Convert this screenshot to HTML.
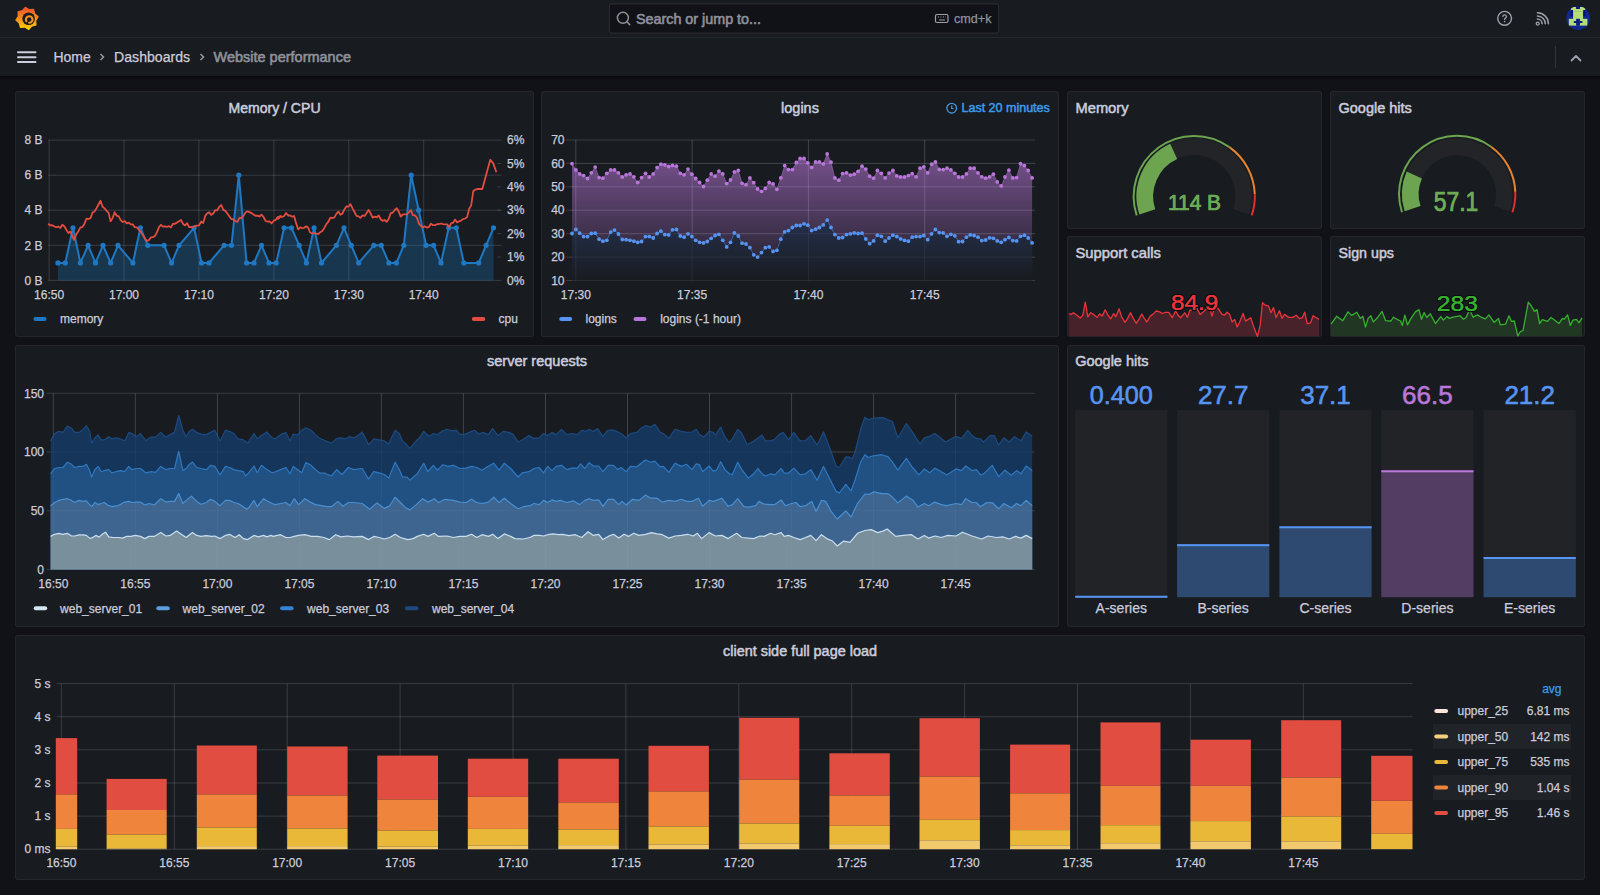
<!DOCTYPE html>
<html><head><meta charset="utf-8"><style>
html,body{margin:0;padding:0;background:#111217;width:1600px;height:895px;overflow:hidden}
svg{display:block;font-family:"Liberation Sans", sans-serif}
</style></head><body>
<svg width="1600" height="895" viewBox="0 0 1600 895">
<defs>
<linearGradient id="logog" x1="0" y1="0" x2="0" y2="1"><stop offset="0.1" stop-color="#f05a28"/><stop offset="0.95" stop-color="#fbca0a"/></linearGradient>
<linearGradient id="hdrshadow" x1="0" y1="0" x2="0" y2="1"><stop offset="0" stop-color="#050608" stop-opacity="0.9"/><stop offset="1" stop-color="#111217" stop-opacity="0"/></linearGradient>
<linearGradient id="gp" x1="0" y1="140" x2="0" y2="280.5" gradientUnits="userSpaceOnUse"><stop offset="0" stop-color="#B877D9" stop-opacity="0.66"/><stop offset="1" stop-color="#B877D9" stop-opacity="0.03"/></linearGradient>
<linearGradient id="gb" x1="0" y1="200" x2="0" y2="280.5" gradientUnits="userSpaceOnUse"><stop offset="0" stop-color="#24365a" stop-opacity="1"/><stop offset="1" stop-color="#181b1f" stop-opacity="1"/></linearGradient>
</defs>
<rect x="0" y="0" width="1600" height="76" fill="#181b1f"/><line x1="0" y1="37.5" x2="1600" y2="37.5" stroke="rgba(204,204,220,0.07)"/><rect x="0" y="76" width="1600" height="6" fill="url(#hdrshadow)"/><polygon points="25.3,7.3 29.2,9.7 33.6,9.4 34.7,13.8 38.1,16.7 35.7,20.6 36,25 31.6,26.1 28.7,29.5 24.8,27.1 20.4,27.4 19.3,23 15.9,20.1 18.3,16.2 18,11.8 22.4,10.7" fill="url(#logog)" stroke="url(#logog)" stroke-width="1.2" stroke-linejoin="round"/><circle cx="28.6" cy="18.8" r="6.3" fill="#181b1f"/><path d="M26.4 21.2A3.3 3.3 0 1 1 29.2 22.8" fill="none" stroke="#f7931e" stroke-width="2.1" stroke-linecap="round"/><rect x="609.5" y="4" width="389" height="29" rx="2" fill="#111217" stroke="rgba(204,204,220,0.12)"/><circle cx="622.9" cy="17.8" r="5.5" fill="none" stroke="#8f909b" stroke-width="1.5"/><line x1="626.9" y1="21.8" x2="629.7" y2="24.6" stroke="#8f909b" stroke-width="1.5" stroke-linecap="round"/><text x="636" y="23.5" font-size="14.3" fill="#8f909b" text-anchor="start" stroke="#8f909b" stroke-width="0.6"  textLength="125" lengthAdjust="spacingAndGlyphs">Search or jump to...</text><rect x="935.5" y="14.5" width="12.5" height="8" rx="1.5" fill="none" stroke="#9fa0ab" stroke-width="1.2"/><path d="M938 17h1M940.5 17h1M943 17h1M945.5 17h.5M939 20h6" stroke="#9fa0ab" stroke-width="1"/><text x="954" y="22.5" font-size="12" fill="#8f909b" text-anchor="start" stroke="#8f909b" stroke-width="0.25"  textLength="37.5" lengthAdjust="spacingAndGlyphs">cmd+k</text><circle cx="1504.6" cy="18.3" r="6.9" fill="none" stroke="#9fa0ab" stroke-width="1.4"/><path d="M1502.9 16.6a1.75 1.75 0 1 1 2.6 1.5c-.6.35-.9.6-.9 1.3" fill="none" stroke="#9fa0ab" stroke-width="1.3" stroke-linecap="round"/><circle cx="1504.6" cy="21.6" r="0.8" fill="#9fa0ab"/><g fill="none" stroke="#9fa0ab" stroke-width="1.5" stroke-linecap="round"><path d="M1537.4 19.1a4.7 4.7 0 0 1 4.7 4.7"/><path d="M1537.4 15.9a7.9 7.9 0 0 1 7.9 7.9"/><path d="M1537.4 12.8a11 11 0 0 1 11 11"/></g><circle cx="1537.7" cy="23.6" r="1.5" fill="none" stroke="#9fa0ab" stroke-width="1.3"/><clipPath id="avc"><circle cx="1578.1" cy="18.05" r="11.9"/></clipPath><g clip-path="url(#avc)"><rect x="1566" y="5" width="25" height="26" fill="#10298c"/><rect x="1570.9" y="7" width="14.3" height="4.8" fill="#b4dc78"/><rect x="1573.1" y="11.6" width="10" height="7.4" fill="#b4dc78"/><rect x="1568.8" y="18.8" width="18.6" height="6.8" fill="#b4dc78"/><rect x="1576.1" y="6" width="3.8" height="3" fill="#07157a"/><rect x="1576.1" y="18.8" width="3.8" height="7" fill="#0b1f82"/><rect x="1573.8" y="21" width="8.6" height="2" fill="#0b1f82"/><rect x="1570.6" y="10" width="2.4" height="6" fill="#07157a"/><rect x="1583.2" y="10" width="2.4" height="6" fill="#07157a"/></g><g stroke="#ccccdc" stroke-width="2" stroke-linecap="round"><line x1="18" y1="52.3" x2="35.5" y2="52.3"/><line x1="18" y1="57.2" x2="35.5" y2="57.2"/><line x1="18" y1="62.1" x2="35.5" y2="62.1"/></g><text x="53.5" y="62" font-size="14" fill="#ccccdc" text-anchor="start" stroke="#ccccdc" stroke-width="0.25"  textLength="37.2" lengthAdjust="spacingAndGlyphs">Home</text><path d="M100.5 54l3 3-3 3" fill="none" stroke="#9a9aa5" stroke-width="1.5"/><text x="114" y="62" font-size="14" fill="#ccccdc" text-anchor="start" stroke="#ccccdc" stroke-width="0.25"  textLength="76.2" lengthAdjust="spacingAndGlyphs">Dashboards</text><path d="M200.5 54l3 3-3 3" fill="none" stroke="#9a9aa5" stroke-width="1.5"/><text x="213.5" y="62" font-size="14.4" fill="#8f909b" text-anchor="start" stroke="#8f909b" stroke-width="0.6"  textLength="137.5" lengthAdjust="spacingAndGlyphs">Website performance</text><line x1="1555.5" y1="46" x2="1555.5" y2="68" stroke="rgba(204,204,220,0.15)"/><path d="M1571.5 60.5l4.5-4.5 4.5 4.5" fill="none" stroke="#9fa0ab" stroke-width="1.8" stroke-linecap="round" stroke-linejoin="round"/><rect x="15.5" y="91.5" width="518" height="245" rx="2" fill="#181b1f" stroke="rgba(204,204,220,0.09)" stroke-width="1"/><rect x="541.5" y="91.5" width="517" height="245" rx="2" fill="#181b1f" stroke="rgba(204,204,220,0.09)" stroke-width="1"/><rect x="1067.5" y="91.5" width="254" height="137" rx="2" fill="#181b1f" stroke="rgba(204,204,220,0.09)" stroke-width="1"/><rect x="1330.5" y="91.5" width="254" height="137" rx="2" fill="#181b1f" stroke="rgba(204,204,220,0.09)" stroke-width="1"/><rect x="1067.5" y="236.5" width="254" height="100" rx="2" fill="#181b1f" stroke="rgba(204,204,220,0.09)" stroke-width="1"/><rect x="1330.5" y="236.5" width="254" height="100" rx="2" fill="#181b1f" stroke="rgba(204,204,220,0.09)" stroke-width="1"/><rect x="15.5" y="345.5" width="1043" height="281" rx="2" fill="#181b1f" stroke="rgba(204,204,220,0.09)" stroke-width="1"/><rect x="1067.5" y="345.5" width="517" height="281" rx="2" fill="#181b1f" stroke="rgba(204,204,220,0.09)" stroke-width="1"/><rect x="15.5" y="635.5" width="1569" height="244" rx="2" fill="#181b1f" stroke="rgba(204,204,220,0.09)" stroke-width="1"/><text x="274.5" y="112.5" font-size="14" fill="#ccccdc" text-anchor="middle" stroke="#ccccdc" stroke-width="0.5"  textLength="92.1" lengthAdjust="spacingAndGlyphs">Memory / CPU</text><line x1="48.2" y1="140.1" x2="501.4" y2="140.1" stroke="rgba(204,204,220,0.19)"/><text x="42.5" y="144.3" font-size="12" fill="#ccccdc" text-anchor="end" stroke="#ccccdc" stroke-width="0.25" >8 B</text><line x1="48.2" y1="175.2" x2="501.4" y2="175.2" stroke="rgba(204,204,220,0.19)"/><text x="42.5" y="179.4" font-size="12" fill="#ccccdc" text-anchor="end" stroke="#ccccdc" stroke-width="0.25" >6 B</text><line x1="48.2" y1="210.2" x2="501.4" y2="210.2" stroke="rgba(204,204,220,0.19)"/><text x="42.5" y="214.4" font-size="12" fill="#ccccdc" text-anchor="end" stroke="#ccccdc" stroke-width="0.25" >4 B</text><line x1="48.2" y1="245.3" x2="501.4" y2="245.3" stroke="rgba(204,204,220,0.19)"/><text x="42.5" y="249.5" font-size="12" fill="#ccccdc" text-anchor="end" stroke="#ccccdc" stroke-width="0.25" >2 B</text><line x1="48.2" y1="280.4" x2="501.4" y2="280.4" stroke="rgba(204,204,220,0.19)"/><text x="42.5" y="284.6" font-size="12" fill="#ccccdc" text-anchor="end" stroke="#ccccdc" stroke-width="0.25" >0 B</text><text x="507" y="144.3" font-size="12" fill="#ccccdc" text-anchor="start" stroke="#ccccdc" stroke-width="0.25" >6%</text><line x1="497.4" y1="163.5" x2="501.4" y2="163.5" stroke="rgba(204,204,220,0.19)"/><text x="507" y="167.7" font-size="12" fill="#ccccdc" text-anchor="start" stroke="#ccccdc" stroke-width="0.25" >5%</text><line x1="497.4" y1="186.9" x2="501.4" y2="186.9" stroke="rgba(204,204,220,0.19)"/><text x="507" y="191.1" font-size="12" fill="#ccccdc" text-anchor="start" stroke="#ccccdc" stroke-width="0.25" >4%</text><line x1="497.4" y1="210.2" x2="501.4" y2="210.2" stroke="rgba(204,204,220,0.19)"/><text x="507" y="214.4" font-size="12" fill="#ccccdc" text-anchor="start" stroke="#ccccdc" stroke-width="0.25" >3%</text><line x1="497.4" y1="233.6" x2="501.4" y2="233.6" stroke="rgba(204,204,220,0.19)"/><text x="507" y="237.8" font-size="12" fill="#ccccdc" text-anchor="start" stroke="#ccccdc" stroke-width="0.25" >2%</text><line x1="497.4" y1="257" x2="501.4" y2="257" stroke="rgba(204,204,220,0.19)"/><text x="507" y="261.2" font-size="12" fill="#ccccdc" text-anchor="start" stroke="#ccccdc" stroke-width="0.25" >1%</text><text x="507" y="284.6" font-size="12" fill="#ccccdc" text-anchor="start" stroke="#ccccdc" stroke-width="0.25" >0%</text><line x1="49.1" y1="140.1" x2="49.1" y2="280.4" stroke="rgba(204,204,220,0.19)"/><text x="49.1" y="298.5" font-size="12" fill="#ccccdc" text-anchor="middle" stroke="#ccccdc" stroke-width="0.25" >16:50</text><line x1="124" y1="140.1" x2="124" y2="280.4" stroke="rgba(204,204,220,0.19)"/><text x="124" y="298.5" font-size="12" fill="#ccccdc" text-anchor="middle" stroke="#ccccdc" stroke-width="0.25" >17:00</text><line x1="198.9" y1="140.1" x2="198.9" y2="280.4" stroke="rgba(204,204,220,0.19)"/><text x="198.9" y="298.5" font-size="12" fill="#ccccdc" text-anchor="middle" stroke="#ccccdc" stroke-width="0.25" >17:10</text><line x1="273.9" y1="140.1" x2="273.9" y2="280.4" stroke="rgba(204,204,220,0.19)"/><text x="273.9" y="298.5" font-size="12" fill="#ccccdc" text-anchor="middle" stroke="#ccccdc" stroke-width="0.25" >17:20</text><line x1="348.8" y1="140.1" x2="348.8" y2="280.4" stroke="rgba(204,204,220,0.19)"/><text x="348.8" y="298.5" font-size="12" fill="#ccccdc" text-anchor="middle" stroke="#ccccdc" stroke-width="0.25" >17:30</text><line x1="423.7" y1="140.1" x2="423.7" y2="280.4" stroke="rgba(204,204,220,0.19)"/><text x="423.7" y="298.5" font-size="12" fill="#ccccdc" text-anchor="middle" stroke="#ccccdc" stroke-width="0.25" >17:40</text><polygon points="57.9,280.4 57.9,262.9 65.3,262.9 73,227.8 80.4,262.9 88.1,245.3 95.5,262.9 103,245.3 110.6,262.9 118,245.3 132.9,262.9 140.4,227.8 147.8,245.3 164.1,245.3 171.6,262.9 179,245.3 194.1,227.8 201.5,262.9 209,262.9 224.1,245.3 231.5,245.3 238.8,175.2 246.6,262.9 254,262.9 261.5,245.3 269,262.9 276.2,262.9 284.1,227.8 291.5,227.8 299.2,245.3 306.4,262.9 314.1,227.8 321.5,262.9 336.4,245.3 344,227.8 351.3,245.3 358.7,262.9 373.8,245.3 381.3,245.3 388.9,262.9 396.4,262.9 403.8,245.3 411.2,175.2 418.7,210.2 426.1,245.3 433.6,245.3 441,262.9 448.7,227.8 456.3,227.8 463.8,262.9 478.7,262.9 486.1,245.3 493.5,227.8 493.5,280.4" fill="#1F78C1" fill-opacity="0.3"/><polyline points="57.9,262.9 65.3,262.9 73,227.8 80.4,262.9 88.1,245.3 95.5,262.9 103,245.3 110.6,262.9 118,245.3 132.9,262.9 140.4,227.8 147.8,245.3 164.1,245.3 171.6,262.9 179,245.3 194.1,227.8 201.5,262.9 209,262.9 224.1,245.3 231.5,245.3 238.8,175.2 246.6,262.9 254,262.9 261.5,245.3 269,262.9 276.2,262.9 284.1,227.8 291.5,227.8 299.2,245.3 306.4,262.9 314.1,227.8 321.5,262.9 336.4,245.3 344,227.8 351.3,245.3 358.7,262.9 373.8,245.3 381.3,245.3 388.9,262.9 396.4,262.9 403.8,245.3 411.2,175.2 418.7,210.2 426.1,245.3 433.6,245.3 441,262.9 448.7,227.8 456.3,227.8 463.8,262.9 478.7,262.9 486.1,245.3 493.5,227.8" fill="none" stroke="#1F78C1" stroke-width="2" stroke-linejoin="round"/><circle cx="57.9" cy="262.9" r="2.6" fill="#1F78C1"/><circle cx="65.3" cy="262.9" r="2.6" fill="#1F78C1"/><circle cx="73" cy="227.8" r="2.6" fill="#1F78C1"/><circle cx="80.4" cy="262.9" r="2.6" fill="#1F78C1"/><circle cx="88.1" cy="245.3" r="2.6" fill="#1F78C1"/><circle cx="95.5" cy="262.9" r="2.6" fill="#1F78C1"/><circle cx="103" cy="245.3" r="2.6" fill="#1F78C1"/><circle cx="110.6" cy="262.9" r="2.6" fill="#1F78C1"/><circle cx="118" cy="245.3" r="2.6" fill="#1F78C1"/><circle cx="132.9" cy="262.9" r="2.6" fill="#1F78C1"/><circle cx="140.4" cy="227.8" r="2.6" fill="#1F78C1"/><circle cx="147.8" cy="245.3" r="2.6" fill="#1F78C1"/><circle cx="164.1" cy="245.3" r="2.6" fill="#1F78C1"/><circle cx="171.6" cy="262.9" r="2.6" fill="#1F78C1"/><circle cx="179" cy="245.3" r="2.6" fill="#1F78C1"/><circle cx="194.1" cy="227.8" r="2.6" fill="#1F78C1"/><circle cx="201.5" cy="262.9" r="2.6" fill="#1F78C1"/><circle cx="209" cy="262.9" r="2.6" fill="#1F78C1"/><circle cx="224.1" cy="245.3" r="2.6" fill="#1F78C1"/><circle cx="231.5" cy="245.3" r="2.6" fill="#1F78C1"/><circle cx="238.8" cy="175.2" r="2.6" fill="#1F78C1"/><circle cx="246.6" cy="262.9" r="2.6" fill="#1F78C1"/><circle cx="254" cy="262.9" r="2.6" fill="#1F78C1"/><circle cx="261.5" cy="245.3" r="2.6" fill="#1F78C1"/><circle cx="269" cy="262.9" r="2.6" fill="#1F78C1"/><circle cx="276.2" cy="262.9" r="2.6" fill="#1F78C1"/><circle cx="284.1" cy="227.8" r="2.6" fill="#1F78C1"/><circle cx="291.5" cy="227.8" r="2.6" fill="#1F78C1"/><circle cx="299.2" cy="245.3" r="2.6" fill="#1F78C1"/><circle cx="306.4" cy="262.9" r="2.6" fill="#1F78C1"/><circle cx="314.1" cy="227.8" r="2.6" fill="#1F78C1"/><circle cx="321.5" cy="262.9" r="2.6" fill="#1F78C1"/><circle cx="336.4" cy="245.3" r="2.6" fill="#1F78C1"/><circle cx="344" cy="227.8" r="2.6" fill="#1F78C1"/><circle cx="351.3" cy="245.3" r="2.6" fill="#1F78C1"/><circle cx="358.7" cy="262.9" r="2.6" fill="#1F78C1"/><circle cx="373.8" cy="245.3" r="2.6" fill="#1F78C1"/><circle cx="381.3" cy="245.3" r="2.6" fill="#1F78C1"/><circle cx="388.9" cy="262.9" r="2.6" fill="#1F78C1"/><circle cx="396.4" cy="262.9" r="2.6" fill="#1F78C1"/><circle cx="403.8" cy="245.3" r="2.6" fill="#1F78C1"/><circle cx="411.2" cy="175.2" r="2.6" fill="#1F78C1"/><circle cx="418.7" cy="210.2" r="2.6" fill="#1F78C1"/><circle cx="426.1" cy="245.3" r="2.6" fill="#1F78C1"/><circle cx="433.6" cy="245.3" r="2.6" fill="#1F78C1"/><circle cx="441" cy="262.9" r="2.6" fill="#1F78C1"/><circle cx="448.7" cy="227.8" r="2.6" fill="#1F78C1"/><circle cx="456.3" cy="227.8" r="2.6" fill="#1F78C1"/><circle cx="463.8" cy="262.9" r="2.6" fill="#1F78C1"/><circle cx="478.7" cy="262.9" r="2.6" fill="#1F78C1"/><circle cx="486.1" cy="245.3" r="2.6" fill="#1F78C1"/><circle cx="493.5" cy="227.8" r="2.6" fill="#1F78C1"/><polyline points="48.2,223.7 50.2,225.3 52.3,225.2 54.3,226.5 56.3,227.1 58.3,226.6 60.3,227.9 62.3,224.8 64.3,226.3 66.3,229.7 68.4,233 70.4,231.6 74,239.9 76.2,234.6 78.4,231.2 80.4,227.4 82.4,227.1 84.4,223.9 86.5,218.7 88.5,219 90.5,218.2 92.5,212.5 94.5,211.5 96.5,208.2 98.5,204.5 100.5,200.8 102.6,206.8 104.6,208.4 106.6,210.8 108.6,212.9 110.6,221.4 112.6,218.1 114.6,212.2 116.6,215.7 118.7,216.4 120.7,220.2 122.7,222 124.7,221.2 126.7,223.3 128.7,222.6 130.7,224.3 132.7,224.4 134.7,227.1 136.8,227.4 138.8,229.7 140.8,232 142.8,234.7 144.8,238.3 146.8,241 148.8,240.2 150.8,237.4 152.9,237.2 154.9,236 156.9,232.4 158.9,227.3 160.9,224.8 162.9,226.6 164.9,226.3 166.9,226.8 169,226.2 171,227.4 173,223.6 175,223.8 177,222.5 179,221.2 181,220 183,223.9 185.1,225.4 187.1,223.1 189.1,227.1 191.1,227 193.1,227.4 195.1,225.9 197.1,225.6 199.1,225.3 201.1,221.6 203.2,223 205.2,215.9 207.2,213.3 209.2,212.4 211.2,214.9 213.2,213.6 215.2,210.2 217.2,210.3 219.3,206.8 221.3,205 223.3,209.9 225.3,210.9 227.3,213.5 229.3,216.2 231.3,219 233.3,219.4 235.4,221 237.4,221.9 239.4,217.9 241.4,218.2 243.4,216 245.4,212.6 247.4,211.4 249.4,212.1 251.4,213.1 253.5,214.4 255.5,215.8 257.5,215.7 259.5,216.5 261.5,214.6 263.5,217 265.5,220.7 267.5,221.7 269.6,221.4 271.6,223.3 273.7,220.7 275.8,219.8 277.9,216.8 280,217.3 278,218.9 280.1,215.9 282.1,217 284.1,216 286.1,213 288.1,215.5 290.1,215.5 292.1,216.7 294.1,216 296.2,223.4 298.2,229.5 300.2,227.4 302.2,228.1 304.2,227.8 306.2,226.3 308.2,227.8 310.2,232.5 312.3,233.5 314.3,233 316.3,233.7 318.3,234 320.3,232.2 322.3,231 324.3,227.9 326.3,224.2 328.4,221.6 330.4,217.6 332.4,218.2 334.4,217.4 336.4,213.9 338.4,211.6 340.4,214.7 342.4,213.6 344.4,209.4 346.5,206.3 348.5,206.7 350.5,204.1 352.5,208.4 354.5,212 356.5,215.8 358.5,216.4 360.5,217.9 362.6,215.4 364.6,216 366.6,213.1 368.6,209.9 370.6,213.4 372.6,217.6 374.6,216.6 376.6,217.4 378.7,215.5 380.7,219.2 382.7,220.8 384.7,220 386.7,221.8 388.7,218.7 390.7,213.1 392.7,212.7 394.7,210 396.8,208.2 398.8,211.8 400.8,216.6 402.8,214.4 404.8,214.3 406.8,214.3 408.8,212.3 410.8,210.2 412.9,215.1 414.9,215.3 416.9,217.5 418.9,223.5 420.9,226 422.9,227.4 424.9,226.4 426.9,227.6 429,226.8 431,223.6 433,225.2 435,225.2 437,224.2 439,224 441,223.5 443,224.1 445.1,224.3 447.1,224.4 449.1,227 451.1,223.4 453.1,222.7 455.1,219.6 457.1,222.4 459.1,221.3 461.1,220.6 463.2,219 465.2,218.5 467.2,216.9 469.2,208.8 471.2,205.4 473.2,191.3 475.2,189.7 477.2,189 479.8,189 482.3,189.1 485.3,177.9 487.8,168.7 490.3,159.7 493.3,163.4 496.4,172.3" fill="none" stroke="#E24D42" stroke-width="1.8" stroke-linejoin="round"/><rect x="33.5" y="317" width="13" height="4" rx="2" fill="#1F78C1"/><text x="60" y="323" font-size="12" fill="#ccccdc" text-anchor="start" stroke="#ccccdc" stroke-width="0.25" >memory</text><rect x="471.8" y="317" width="13.5" height="4" rx="2" fill="#E24D42"/><text x="498.5" y="323" font-size="12" fill="#ccccdc" text-anchor="start" stroke="#ccccdc" stroke-width="0.25" >cpu</text><text x="800" y="112.5" font-size="14" fill="#ccccdc" text-anchor="middle" stroke="#ccccdc" stroke-width="0.5"  textLength="37.8" lengthAdjust="spacingAndGlyphs">logins</text><circle cx="951.7" cy="108.2" r="4.8" fill="none" stroke="#3d9ae8" stroke-width="1.3"/><path d="M951.7 105.5v3h2" fill="none" stroke="#3d9ae8" stroke-width="1.2"/><text x="961.5" y="112" font-size="12.5" fill="#3d9ae8" text-anchor="start" stroke="#3d9ae8" stroke-width="0.5"  textLength="88.3" lengthAdjust="spacingAndGlyphs">Last 20 minutes</text><line x1="565.8" y1="140" x2="1035.2" y2="140" stroke="rgba(204,204,220,0.19)"/><text x="564.5" y="144.2" font-size="12" fill="#ccccdc" text-anchor="end" stroke="#ccccdc" stroke-width="0.25" >70</text><line x1="565.8" y1="163.4" x2="1035.2" y2="163.4" stroke="rgba(204,204,220,0.19)"/><text x="564.5" y="167.6" font-size="12" fill="#ccccdc" text-anchor="end" stroke="#ccccdc" stroke-width="0.25" >60</text><line x1="565.8" y1="186.8" x2="1035.2" y2="186.8" stroke="rgba(204,204,220,0.19)"/><text x="564.5" y="191" font-size="12" fill="#ccccdc" text-anchor="end" stroke="#ccccdc" stroke-width="0.25" >50</text><line x1="565.8" y1="210.2" x2="1035.2" y2="210.2" stroke="rgba(204,204,220,0.19)"/><text x="564.5" y="214.4" font-size="12" fill="#ccccdc" text-anchor="end" stroke="#ccccdc" stroke-width="0.25" >40</text><line x1="565.8" y1="233.7" x2="1035.2" y2="233.7" stroke="rgba(204,204,220,0.19)"/><text x="564.5" y="237.9" font-size="12" fill="#ccccdc" text-anchor="end" stroke="#ccccdc" stroke-width="0.25" >30</text><line x1="565.8" y1="257.1" x2="1035.2" y2="257.1" stroke="rgba(204,204,220,0.19)"/><text x="564.5" y="261.3" font-size="12" fill="#ccccdc" text-anchor="end" stroke="#ccccdc" stroke-width="0.25" >20</text><line x1="565.8" y1="280.5" x2="1035.2" y2="280.5" stroke="rgba(204,204,220,0.19)"/><text x="564.5" y="284.7" font-size="12" fill="#ccccdc" text-anchor="end" stroke="#ccccdc" stroke-width="0.25" >10</text><line x1="575.8" y1="140" x2="575.8" y2="280.5" stroke="rgba(204,204,220,0.19)"/><text x="575.8" y="298.5" font-size="12" fill="#ccccdc" text-anchor="middle" stroke="#ccccdc" stroke-width="0.25" >17:30</text><line x1="692.1" y1="140" x2="692.1" y2="280.5" stroke="rgba(204,204,220,0.19)"/><text x="692.1" y="298.5" font-size="12" fill="#ccccdc" text-anchor="middle" stroke="#ccccdc" stroke-width="0.25" >17:35</text><line x1="808.4" y1="140" x2="808.4" y2="280.5" stroke="rgba(204,204,220,0.19)"/><text x="808.4" y="298.5" font-size="12" fill="#ccccdc" text-anchor="middle" stroke="#ccccdc" stroke-width="0.25" >17:40</text><line x1="924.7" y1="140" x2="924.7" y2="280.5" stroke="rgba(204,204,220,0.19)"/><text x="924.7" y="298.5" font-size="12" fill="#ccccdc" text-anchor="middle" stroke="#ccccdc" stroke-width="0.25" >17:45</text><polygon points="572,280.5 572,163.7 575.9,169.9 579.7,173.9 583.6,175.6 587.5,178.5 591.3,172.8 595.2,167.1 599.1,177.6 602.9,178.2 606.8,173.3 610.7,169.9 614.5,169.9 618.4,172.8 622.3,177 626.1,174.8 630,173.9 633.9,176.8 637.7,182.5 641.6,177.6 645.5,173.3 649.3,177 653.2,173.9 657.1,167.6 660.9,164.2 664.8,164.8 668.7,166.5 672.5,165.4 676.4,166.2 680.3,173.3 684.1,174.8 688,169.1 691.9,174.2 695.7,178.5 699.6,182.5 703.5,186.5 707.3,180.2 711.2,173.9 715.1,176.2 718.9,171.1 722.8,173.9 726.7,183.6 730.5,179.9 734.4,171.9 738.3,170.5 742.1,183.3 746,184.7 749.9,177.9 753.7,182.7 757.6,189 761.5,191.3 765.3,188.4 769.2,182.5 773.1,183.9 776.9,189.3 780.8,177.9 784.7,165.6 788.5,169.6 792.4,169.6 796.3,162.5 800.1,158.5 804,158.5 807.8,162.8 811.7,167.4 815.6,161.9 819.4,161.9 823.3,163.9 827.2,154 831,162.2 834.9,177.9 838.8,180.2 842.6,173.6 846.5,172.8 850.4,175.1 854.2,174.2 858.1,171.3 862,166.2 865.8,169.1 869.7,176.2 873.6,178.2 877.4,170.5 881.3,173.3 885.2,177.9 889,173.1 892.9,170.5 896.8,175.9 900.6,177 904.5,177 908.4,175.6 912.2,173.6 916.1,176.8 920,168.2 923.8,166.8 927.7,172.8 931.6,164.2 935.4,161.9 939.3,169.4 943.2,169.6 947,168.2 950.9,169.9 954.8,173.3 958.6,177 962.5,177 966.4,173.9 970.2,168.2 974.1,168.2 978,172.8 981.8,176.8 985.7,178.2 989.6,176.8 993.4,174.2 997.3,181.9 1001.2,185.9 1005,177 1008.9,170.2 1012.8,177.9 1016.6,177.6 1020.5,163.7 1024.4,165.6 1028.2,170.5 1032.1,177.9 1032.1,280.5" fill="url(#gp)"/><polygon points="572,280.5 572,233.5 575.9,229.5 579.7,233.2 583.6,236.6 587.5,236.6 591.3,233.5 595.2,233.2 599.1,239.2 602.9,241.2 606.8,240.3 610.7,232.1 614.5,230.1 618.4,234 622.3,239.5 626.1,239.7 630,240.3 633.9,241.2 637.7,242.3 641.6,241.5 645.5,236.6 649.3,236.6 653.2,238 657.1,233.5 660.9,231.2 664.8,234.6 668.7,234.9 672.5,229.8 676.4,229.5 680.3,236 684.1,237.2 688,233.8 691.9,236.6 695.7,240.3 699.6,242.3 703.5,242.9 707.3,241.5 711.2,238.3 715.1,235.5 718.9,234.3 722.8,240.3 726.7,246.9 730.5,242.3 734.4,232.9 738.3,236 742.1,243.2 746,244 749.9,247.7 753.7,254.8 757.6,257.1 761.5,252.6 765.3,247.7 769.2,246.9 773.1,251.4 776.9,250.3 780.8,239.2 784.7,231.8 788.5,230.6 792.4,227.5 796.3,225.5 800.1,225.5 804,223.8 807.8,225.2 811.7,230.6 815.6,229.2 819.4,227.5 823.3,224.9 827.2,220.1 831,227.5 834.9,234.6 838.8,238 842.6,237.5 846.5,234.6 850.4,233.8 854.2,232.9 858.1,233.5 862,233.2 865.8,238.9 869.7,243.7 873.6,240.9 877.4,235.2 881.3,236.3 885.2,241.2 889,238 892.9,235.2 896.8,236.6 900.6,238.9 904.5,240.3 908.4,241.2 912.2,237.2 916.1,236.6 920,236.6 923.8,235.5 927.7,239.7 931.6,233.8 935.4,229.5 939.3,232.6 943.2,232.9 947,236.3 950.9,234.3 954.8,235.8 958.6,241.7 962.5,241.5 966.4,237.2 970.2,234.9 974.1,235.5 978,237.2 981.8,240.6 985.7,240 989.6,237.8 993.4,238.3 997.3,240.9 1001.2,242.3 1005,239.7 1008.9,237.5 1012.8,240.6 1016.6,240.9 1020.5,236.3 1024.4,235.2 1028.2,238 1032.1,242.9 1032.1,280.5" fill="url(#gb)" fill-opacity="0.92"/><line x1="569.8" y1="163.4" x2="1035.2" y2="163.4" stroke="rgba(204,204,220,0.07)"/><line x1="569.8" y1="186.8" x2="1035.2" y2="186.8" stroke="rgba(204,204,220,0.07)"/><line x1="569.8" y1="210.2" x2="1035.2" y2="210.2" stroke="rgba(204,204,220,0.07)"/><line x1="569.8" y1="233.7" x2="1035.2" y2="233.7" stroke="rgba(204,204,220,0.07)"/><line x1="569.8" y1="257.1" x2="1035.2" y2="257.1" stroke="rgba(204,204,220,0.07)"/><line x1="575.8" y1="140" x2="575.8" y2="280.5" stroke="rgba(204,204,220,0.07)"/><line x1="692.1" y1="140" x2="692.1" y2="280.5" stroke="rgba(204,204,220,0.07)"/><line x1="808.4" y1="140" x2="808.4" y2="280.5" stroke="rgba(204,204,220,0.07)"/><line x1="924.7" y1="140" x2="924.7" y2="280.5" stroke="rgba(204,204,220,0.07)"/><polyline points="572,163.7 575.9,169.9 579.7,173.9 583.6,175.6 587.5,178.5 591.3,172.8 595.2,167.1 599.1,177.6 602.9,178.2 606.8,173.3 610.7,169.9 614.5,169.9 618.4,172.8 622.3,177 626.1,174.8 630,173.9 633.9,176.8 637.7,182.5 641.6,177.6 645.5,173.3 649.3,177 653.2,173.9 657.1,167.6 660.9,164.2 664.8,164.8 668.7,166.5 672.5,165.4 676.4,166.2 680.3,173.3 684.1,174.8 688,169.1 691.9,174.2 695.7,178.5 699.6,182.5 703.5,186.5 707.3,180.2 711.2,173.9 715.1,176.2 718.9,171.1 722.8,173.9 726.7,183.6 730.5,179.9 734.4,171.9 738.3,170.5 742.1,183.3 746,184.7 749.9,177.9 753.7,182.7 757.6,189 761.5,191.3 765.3,188.4 769.2,182.5 773.1,183.9 776.9,189.3 780.8,177.9 784.7,165.6 788.5,169.6 792.4,169.6 796.3,162.5 800.1,158.5 804,158.5 807.8,162.8 811.7,167.4 815.6,161.9 819.4,161.9 823.3,163.9 827.2,154 831,162.2 834.9,177.9 838.8,180.2 842.6,173.6 846.5,172.8 850.4,175.1 854.2,174.2 858.1,171.3 862,166.2 865.8,169.1 869.7,176.2 873.6,178.2 877.4,170.5 881.3,173.3 885.2,177.9 889,173.1 892.9,170.5 896.8,175.9 900.6,177 904.5,177 908.4,175.6 912.2,173.6 916.1,176.8 920,168.2 923.8,166.8 927.7,172.8 931.6,164.2 935.4,161.9 939.3,169.4 943.2,169.6 947,168.2 950.9,169.9 954.8,173.3 958.6,177 962.5,177 966.4,173.9 970.2,168.2 974.1,168.2 978,172.8 981.8,176.8 985.7,178.2 989.6,176.8 993.4,174.2 997.3,181.9 1001.2,185.9 1005,177 1008.9,170.2 1012.8,177.9 1016.6,177.6 1020.5,163.7 1024.4,165.6 1028.2,170.5 1032.1,177.9" fill="none" stroke="#B877D9" stroke-width="0.8" stroke-opacity="0.6"/><polyline points="572,233.5 575.9,229.5 579.7,233.2 583.6,236.6 587.5,236.6 591.3,233.5 595.2,233.2 599.1,239.2 602.9,241.2 606.8,240.3 610.7,232.1 614.5,230.1 618.4,234 622.3,239.5 626.1,239.7 630,240.3 633.9,241.2 637.7,242.3 641.6,241.5 645.5,236.6 649.3,236.6 653.2,238 657.1,233.5 660.9,231.2 664.8,234.6 668.7,234.9 672.5,229.8 676.4,229.5 680.3,236 684.1,237.2 688,233.8 691.9,236.6 695.7,240.3 699.6,242.3 703.5,242.9 707.3,241.5 711.2,238.3 715.1,235.5 718.9,234.3 722.8,240.3 726.7,246.9 730.5,242.3 734.4,232.9 738.3,236 742.1,243.2 746,244 749.9,247.7 753.7,254.8 757.6,257.1 761.5,252.6 765.3,247.7 769.2,246.9 773.1,251.4 776.9,250.3 780.8,239.2 784.7,231.8 788.5,230.6 792.4,227.5 796.3,225.5 800.1,225.5 804,223.8 807.8,225.2 811.7,230.6 815.6,229.2 819.4,227.5 823.3,224.9 827.2,220.1 831,227.5 834.9,234.6 838.8,238 842.6,237.5 846.5,234.6 850.4,233.8 854.2,232.9 858.1,233.5 862,233.2 865.8,238.9 869.7,243.7 873.6,240.9 877.4,235.2 881.3,236.3 885.2,241.2 889,238 892.9,235.2 896.8,236.6 900.6,238.9 904.5,240.3 908.4,241.2 912.2,237.2 916.1,236.6 920,236.6 923.8,235.5 927.7,239.7 931.6,233.8 935.4,229.5 939.3,232.6 943.2,232.9 947,236.3 950.9,234.3 954.8,235.8 958.6,241.7 962.5,241.5 966.4,237.2 970.2,234.9 974.1,235.5 978,237.2 981.8,240.6 985.7,240 989.6,237.8 993.4,238.3 997.3,240.9 1001.2,242.3 1005,239.7 1008.9,237.5 1012.8,240.6 1016.6,240.9 1020.5,236.3 1024.4,235.2 1028.2,238 1032.1,242.9" fill="none" stroke="#5794F2" stroke-width="0.8" stroke-opacity="0.6"/><circle cx="572" cy="163.7" r="1.9" fill="#B877D9"/><circle cx="575.9" cy="169.9" r="1.9" fill="#B877D9"/><circle cx="579.7" cy="173.9" r="1.9" fill="#B877D9"/><circle cx="583.6" cy="175.6" r="1.9" fill="#B877D9"/><circle cx="587.5" cy="178.5" r="1.9" fill="#B877D9"/><circle cx="591.3" cy="172.8" r="1.9" fill="#B877D9"/><circle cx="595.2" cy="167.1" r="1.9" fill="#B877D9"/><circle cx="599.1" cy="177.6" r="1.9" fill="#B877D9"/><circle cx="602.9" cy="178.2" r="1.9" fill="#B877D9"/><circle cx="606.8" cy="173.3" r="1.9" fill="#B877D9"/><circle cx="610.7" cy="169.9" r="1.9" fill="#B877D9"/><circle cx="614.5" cy="169.9" r="1.9" fill="#B877D9"/><circle cx="618.4" cy="172.8" r="1.9" fill="#B877D9"/><circle cx="622.3" cy="177" r="1.9" fill="#B877D9"/><circle cx="626.1" cy="174.8" r="1.9" fill="#B877D9"/><circle cx="630" cy="173.9" r="1.9" fill="#B877D9"/><circle cx="633.9" cy="176.8" r="1.9" fill="#B877D9"/><circle cx="637.7" cy="182.5" r="1.9" fill="#B877D9"/><circle cx="641.6" cy="177.6" r="1.9" fill="#B877D9"/><circle cx="645.5" cy="173.3" r="1.9" fill="#B877D9"/><circle cx="649.3" cy="177" r="1.9" fill="#B877D9"/><circle cx="653.2" cy="173.9" r="1.9" fill="#B877D9"/><circle cx="657.1" cy="167.6" r="1.9" fill="#B877D9"/><circle cx="660.9" cy="164.2" r="1.9" fill="#B877D9"/><circle cx="664.8" cy="164.8" r="1.9" fill="#B877D9"/><circle cx="668.7" cy="166.5" r="1.9" fill="#B877D9"/><circle cx="672.5" cy="165.4" r="1.9" fill="#B877D9"/><circle cx="676.4" cy="166.2" r="1.9" fill="#B877D9"/><circle cx="680.3" cy="173.3" r="1.9" fill="#B877D9"/><circle cx="684.1" cy="174.8" r="1.9" fill="#B877D9"/><circle cx="688" cy="169.1" r="1.9" fill="#B877D9"/><circle cx="691.9" cy="174.2" r="1.9" fill="#B877D9"/><circle cx="695.7" cy="178.5" r="1.9" fill="#B877D9"/><circle cx="699.6" cy="182.5" r="1.9" fill="#B877D9"/><circle cx="703.5" cy="186.5" r="1.9" fill="#B877D9"/><circle cx="707.3" cy="180.2" r="1.9" fill="#B877D9"/><circle cx="711.2" cy="173.9" r="1.9" fill="#B877D9"/><circle cx="715.1" cy="176.2" r="1.9" fill="#B877D9"/><circle cx="718.9" cy="171.1" r="1.9" fill="#B877D9"/><circle cx="722.8" cy="173.9" r="1.9" fill="#B877D9"/><circle cx="726.7" cy="183.6" r="1.9" fill="#B877D9"/><circle cx="730.5" cy="179.9" r="1.9" fill="#B877D9"/><circle cx="734.4" cy="171.9" r="1.9" fill="#B877D9"/><circle cx="738.3" cy="170.5" r="1.9" fill="#B877D9"/><circle cx="742.1" cy="183.3" r="1.9" fill="#B877D9"/><circle cx="746" cy="184.7" r="1.9" fill="#B877D9"/><circle cx="749.9" cy="177.9" r="1.9" fill="#B877D9"/><circle cx="753.7" cy="182.7" r="1.9" fill="#B877D9"/><circle cx="757.6" cy="189" r="1.9" fill="#B877D9"/><circle cx="761.5" cy="191.3" r="1.9" fill="#B877D9"/><circle cx="765.3" cy="188.4" r="1.9" fill="#B877D9"/><circle cx="769.2" cy="182.5" r="1.9" fill="#B877D9"/><circle cx="773.1" cy="183.9" r="1.9" fill="#B877D9"/><circle cx="776.9" cy="189.3" r="1.9" fill="#B877D9"/><circle cx="780.8" cy="177.9" r="1.9" fill="#B877D9"/><circle cx="784.7" cy="165.6" r="1.9" fill="#B877D9"/><circle cx="788.5" cy="169.6" r="1.9" fill="#B877D9"/><circle cx="792.4" cy="169.6" r="1.9" fill="#B877D9"/><circle cx="796.3" cy="162.5" r="1.9" fill="#B877D9"/><circle cx="800.1" cy="158.5" r="1.9" fill="#B877D9"/><circle cx="804" cy="158.5" r="1.9" fill="#B877D9"/><circle cx="807.8" cy="162.8" r="1.9" fill="#B877D9"/><circle cx="811.7" cy="167.4" r="1.9" fill="#B877D9"/><circle cx="815.6" cy="161.9" r="1.9" fill="#B877D9"/><circle cx="819.4" cy="161.9" r="1.9" fill="#B877D9"/><circle cx="823.3" cy="163.9" r="1.9" fill="#B877D9"/><circle cx="827.2" cy="154" r="1.9" fill="#B877D9"/><circle cx="831" cy="162.2" r="1.9" fill="#B877D9"/><circle cx="834.9" cy="177.9" r="1.9" fill="#B877D9"/><circle cx="838.8" cy="180.2" r="1.9" fill="#B877D9"/><circle cx="842.6" cy="173.6" r="1.9" fill="#B877D9"/><circle cx="846.5" cy="172.8" r="1.9" fill="#B877D9"/><circle cx="850.4" cy="175.1" r="1.9" fill="#B877D9"/><circle cx="854.2" cy="174.2" r="1.9" fill="#B877D9"/><circle cx="858.1" cy="171.3" r="1.9" fill="#B877D9"/><circle cx="862" cy="166.2" r="1.9" fill="#B877D9"/><circle cx="865.8" cy="169.1" r="1.9" fill="#B877D9"/><circle cx="869.7" cy="176.2" r="1.9" fill="#B877D9"/><circle cx="873.6" cy="178.2" r="1.9" fill="#B877D9"/><circle cx="877.4" cy="170.5" r="1.9" fill="#B877D9"/><circle cx="881.3" cy="173.3" r="1.9" fill="#B877D9"/><circle cx="885.2" cy="177.9" r="1.9" fill="#B877D9"/><circle cx="889" cy="173.1" r="1.9" fill="#B877D9"/><circle cx="892.9" cy="170.5" r="1.9" fill="#B877D9"/><circle cx="896.8" cy="175.9" r="1.9" fill="#B877D9"/><circle cx="900.6" cy="177" r="1.9" fill="#B877D9"/><circle cx="904.5" cy="177" r="1.9" fill="#B877D9"/><circle cx="908.4" cy="175.6" r="1.9" fill="#B877D9"/><circle cx="912.2" cy="173.6" r="1.9" fill="#B877D9"/><circle cx="916.1" cy="176.8" r="1.9" fill="#B877D9"/><circle cx="920" cy="168.2" r="1.9" fill="#B877D9"/><circle cx="923.8" cy="166.8" r="1.9" fill="#B877D9"/><circle cx="927.7" cy="172.8" r="1.9" fill="#B877D9"/><circle cx="931.6" cy="164.2" r="1.9" fill="#B877D9"/><circle cx="935.4" cy="161.9" r="1.9" fill="#B877D9"/><circle cx="939.3" cy="169.4" r="1.9" fill="#B877D9"/><circle cx="943.2" cy="169.6" r="1.9" fill="#B877D9"/><circle cx="947" cy="168.2" r="1.9" fill="#B877D9"/><circle cx="950.9" cy="169.9" r="1.9" fill="#B877D9"/><circle cx="954.8" cy="173.3" r="1.9" fill="#B877D9"/><circle cx="958.6" cy="177" r="1.9" fill="#B877D9"/><circle cx="962.5" cy="177" r="1.9" fill="#B877D9"/><circle cx="966.4" cy="173.9" r="1.9" fill="#B877D9"/><circle cx="970.2" cy="168.2" r="1.9" fill="#B877D9"/><circle cx="974.1" cy="168.2" r="1.9" fill="#B877D9"/><circle cx="978" cy="172.8" r="1.9" fill="#B877D9"/><circle cx="981.8" cy="176.8" r="1.9" fill="#B877D9"/><circle cx="985.7" cy="178.2" r="1.9" fill="#B877D9"/><circle cx="989.6" cy="176.8" r="1.9" fill="#B877D9"/><circle cx="993.4" cy="174.2" r="1.9" fill="#B877D9"/><circle cx="997.3" cy="181.9" r="1.9" fill="#B877D9"/><circle cx="1001.2" cy="185.9" r="1.9" fill="#B877D9"/><circle cx="1005" cy="177" r="1.9" fill="#B877D9"/><circle cx="1008.9" cy="170.2" r="1.9" fill="#B877D9"/><circle cx="1012.8" cy="177.9" r="1.9" fill="#B877D9"/><circle cx="1016.6" cy="177.6" r="1.9" fill="#B877D9"/><circle cx="1020.5" cy="163.7" r="1.9" fill="#B877D9"/><circle cx="1024.4" cy="165.6" r="1.9" fill="#B877D9"/><circle cx="1028.2" cy="170.5" r="1.9" fill="#B877D9"/><circle cx="1032.1" cy="177.9" r="1.9" fill="#B877D9"/><circle cx="572" cy="233.5" r="1.9" fill="#5794F2"/><circle cx="575.9" cy="229.5" r="1.9" fill="#5794F2"/><circle cx="579.7" cy="233.2" r="1.9" fill="#5794F2"/><circle cx="583.6" cy="236.6" r="1.9" fill="#5794F2"/><circle cx="587.5" cy="236.6" r="1.9" fill="#5794F2"/><circle cx="591.3" cy="233.5" r="1.9" fill="#5794F2"/><circle cx="595.2" cy="233.2" r="1.9" fill="#5794F2"/><circle cx="599.1" cy="239.2" r="1.9" fill="#5794F2"/><circle cx="602.9" cy="241.2" r="1.9" fill="#5794F2"/><circle cx="606.8" cy="240.3" r="1.9" fill="#5794F2"/><circle cx="610.7" cy="232.1" r="1.9" fill="#5794F2"/><circle cx="614.5" cy="230.1" r="1.9" fill="#5794F2"/><circle cx="618.4" cy="234" r="1.9" fill="#5794F2"/><circle cx="622.3" cy="239.5" r="1.9" fill="#5794F2"/><circle cx="626.1" cy="239.7" r="1.9" fill="#5794F2"/><circle cx="630" cy="240.3" r="1.9" fill="#5794F2"/><circle cx="633.9" cy="241.2" r="1.9" fill="#5794F2"/><circle cx="637.7" cy="242.3" r="1.9" fill="#5794F2"/><circle cx="641.6" cy="241.5" r="1.9" fill="#5794F2"/><circle cx="645.5" cy="236.6" r="1.9" fill="#5794F2"/><circle cx="649.3" cy="236.6" r="1.9" fill="#5794F2"/><circle cx="653.2" cy="238" r="1.9" fill="#5794F2"/><circle cx="657.1" cy="233.5" r="1.9" fill="#5794F2"/><circle cx="660.9" cy="231.2" r="1.9" fill="#5794F2"/><circle cx="664.8" cy="234.6" r="1.9" fill="#5794F2"/><circle cx="668.7" cy="234.9" r="1.9" fill="#5794F2"/><circle cx="672.5" cy="229.8" r="1.9" fill="#5794F2"/><circle cx="676.4" cy="229.5" r="1.9" fill="#5794F2"/><circle cx="680.3" cy="236" r="1.9" fill="#5794F2"/><circle cx="684.1" cy="237.2" r="1.9" fill="#5794F2"/><circle cx="688" cy="233.8" r="1.9" fill="#5794F2"/><circle cx="691.9" cy="236.6" r="1.9" fill="#5794F2"/><circle cx="695.7" cy="240.3" r="1.9" fill="#5794F2"/><circle cx="699.6" cy="242.3" r="1.9" fill="#5794F2"/><circle cx="703.5" cy="242.9" r="1.9" fill="#5794F2"/><circle cx="707.3" cy="241.5" r="1.9" fill="#5794F2"/><circle cx="711.2" cy="238.3" r="1.9" fill="#5794F2"/><circle cx="715.1" cy="235.5" r="1.9" fill="#5794F2"/><circle cx="718.9" cy="234.3" r="1.9" fill="#5794F2"/><circle cx="722.8" cy="240.3" r="1.9" fill="#5794F2"/><circle cx="726.7" cy="246.9" r="1.9" fill="#5794F2"/><circle cx="730.5" cy="242.3" r="1.9" fill="#5794F2"/><circle cx="734.4" cy="232.9" r="1.9" fill="#5794F2"/><circle cx="738.3" cy="236" r="1.9" fill="#5794F2"/><circle cx="742.1" cy="243.2" r="1.9" fill="#5794F2"/><circle cx="746" cy="244" r="1.9" fill="#5794F2"/><circle cx="749.9" cy="247.7" r="1.9" fill="#5794F2"/><circle cx="753.7" cy="254.8" r="1.9" fill="#5794F2"/><circle cx="757.6" cy="257.1" r="1.9" fill="#5794F2"/><circle cx="761.5" cy="252.6" r="1.9" fill="#5794F2"/><circle cx="765.3" cy="247.7" r="1.9" fill="#5794F2"/><circle cx="769.2" cy="246.9" r="1.9" fill="#5794F2"/><circle cx="773.1" cy="251.4" r="1.9" fill="#5794F2"/><circle cx="776.9" cy="250.3" r="1.9" fill="#5794F2"/><circle cx="780.8" cy="239.2" r="1.9" fill="#5794F2"/><circle cx="784.7" cy="231.8" r="1.9" fill="#5794F2"/><circle cx="788.5" cy="230.6" r="1.9" fill="#5794F2"/><circle cx="792.4" cy="227.5" r="1.9" fill="#5794F2"/><circle cx="796.3" cy="225.5" r="1.9" fill="#5794F2"/><circle cx="800.1" cy="225.5" r="1.9" fill="#5794F2"/><circle cx="804" cy="223.8" r="1.9" fill="#5794F2"/><circle cx="807.8" cy="225.2" r="1.9" fill="#5794F2"/><circle cx="811.7" cy="230.6" r="1.9" fill="#5794F2"/><circle cx="815.6" cy="229.2" r="1.9" fill="#5794F2"/><circle cx="819.4" cy="227.5" r="1.9" fill="#5794F2"/><circle cx="823.3" cy="224.9" r="1.9" fill="#5794F2"/><circle cx="827.2" cy="220.1" r="1.9" fill="#5794F2"/><circle cx="831" cy="227.5" r="1.9" fill="#5794F2"/><circle cx="834.9" cy="234.6" r="1.9" fill="#5794F2"/><circle cx="838.8" cy="238" r="1.9" fill="#5794F2"/><circle cx="842.6" cy="237.5" r="1.9" fill="#5794F2"/><circle cx="846.5" cy="234.6" r="1.9" fill="#5794F2"/><circle cx="850.4" cy="233.8" r="1.9" fill="#5794F2"/><circle cx="854.2" cy="232.9" r="1.9" fill="#5794F2"/><circle cx="858.1" cy="233.5" r="1.9" fill="#5794F2"/><circle cx="862" cy="233.2" r="1.9" fill="#5794F2"/><circle cx="865.8" cy="238.9" r="1.9" fill="#5794F2"/><circle cx="869.7" cy="243.7" r="1.9" fill="#5794F2"/><circle cx="873.6" cy="240.9" r="1.9" fill="#5794F2"/><circle cx="877.4" cy="235.2" r="1.9" fill="#5794F2"/><circle cx="881.3" cy="236.3" r="1.9" fill="#5794F2"/><circle cx="885.2" cy="241.2" r="1.9" fill="#5794F2"/><circle cx="889" cy="238" r="1.9" fill="#5794F2"/><circle cx="892.9" cy="235.2" r="1.9" fill="#5794F2"/><circle cx="896.8" cy="236.6" r="1.9" fill="#5794F2"/><circle cx="900.6" cy="238.9" r="1.9" fill="#5794F2"/><circle cx="904.5" cy="240.3" r="1.9" fill="#5794F2"/><circle cx="908.4" cy="241.2" r="1.9" fill="#5794F2"/><circle cx="912.2" cy="237.2" r="1.9" fill="#5794F2"/><circle cx="916.1" cy="236.6" r="1.9" fill="#5794F2"/><circle cx="920" cy="236.6" r="1.9" fill="#5794F2"/><circle cx="923.8" cy="235.5" r="1.9" fill="#5794F2"/><circle cx="927.7" cy="239.7" r="1.9" fill="#5794F2"/><circle cx="931.6" cy="233.8" r="1.9" fill="#5794F2"/><circle cx="935.4" cy="229.5" r="1.9" fill="#5794F2"/><circle cx="939.3" cy="232.6" r="1.9" fill="#5794F2"/><circle cx="943.2" cy="232.9" r="1.9" fill="#5794F2"/><circle cx="947" cy="236.3" r="1.9" fill="#5794F2"/><circle cx="950.9" cy="234.3" r="1.9" fill="#5794F2"/><circle cx="954.8" cy="235.8" r="1.9" fill="#5794F2"/><circle cx="958.6" cy="241.7" r="1.9" fill="#5794F2"/><circle cx="962.5" cy="241.5" r="1.9" fill="#5794F2"/><circle cx="966.4" cy="237.2" r="1.9" fill="#5794F2"/><circle cx="970.2" cy="234.9" r="1.9" fill="#5794F2"/><circle cx="974.1" cy="235.5" r="1.9" fill="#5794F2"/><circle cx="978" cy="237.2" r="1.9" fill="#5794F2"/><circle cx="981.8" cy="240.6" r="1.9" fill="#5794F2"/><circle cx="985.7" cy="240" r="1.9" fill="#5794F2"/><circle cx="989.6" cy="237.8" r="1.9" fill="#5794F2"/><circle cx="993.4" cy="238.3" r="1.9" fill="#5794F2"/><circle cx="997.3" cy="240.9" r="1.9" fill="#5794F2"/><circle cx="1001.2" cy="242.3" r="1.9" fill="#5794F2"/><circle cx="1005" cy="239.7" r="1.9" fill="#5794F2"/><circle cx="1008.9" cy="237.5" r="1.9" fill="#5794F2"/><circle cx="1012.8" cy="240.6" r="1.9" fill="#5794F2"/><circle cx="1016.6" cy="240.9" r="1.9" fill="#5794F2"/><circle cx="1020.5" cy="236.3" r="1.9" fill="#5794F2"/><circle cx="1024.4" cy="235.2" r="1.9" fill="#5794F2"/><circle cx="1028.2" cy="238" r="1.9" fill="#5794F2"/><circle cx="1032.1" cy="242.9" r="1.9" fill="#5794F2"/><rect x="559.2" y="317" width="13" height="4" rx="2" fill="#5794F2"/><text x="585.5" y="323" font-size="12" fill="#ccccdc" text-anchor="start" stroke="#ccccdc" stroke-width="0.25" >logins</text><rect x="633.5" y="317" width="13" height="4" rx="2" fill="#B877D9"/><text x="660.2" y="323" font-size="12" fill="#ccccdc" text-anchor="start" stroke="#ccccdc" stroke-width="0.25" >logins (-1 hour)</text><text x="1075.5" y="113" font-size="14" fill="#ccccdc" text-anchor="start" stroke="#ccccdc" stroke-width="0.5"  textLength="53" lengthAdjust="spacingAndGlyphs">Memory</text><path d="M1147.3 211.9A49.5 49.5 0 1 1 1241.1 211.9" fill="none" stroke="#232428" stroke-width="16.7"/><path d="M1147.3 211.9A49.5 49.5 0 0 1 1173.7 151.4" fill="none" stroke="#6ca450" stroke-width="16.7"/><path d="M1136.7 215.4A60.6 60.6 0 0 1 1229.4 147.1" fill="none" stroke="#6ca450" stroke-width="2"/><path d="M1229.4 147.1A60.6 60.6 0 0 1 1254.8 194.2" fill="none" stroke="#e5832e" stroke-width="2"/><path d="M1254.8 194.2A60.6 60.6 0 0 1 1251.7 215.4" fill="none" stroke="#e02f2f" stroke-width="2"/><text x="1194.5" y="210.3" font-size="22" fill="#6cab55" text-anchor="middle" stroke="#0b0c0e" stroke-width="0" textLength="53" lengthAdjust="spacingAndGlyphs">114 B</text><text x="1194.5" y="210.3" font-size="22" fill="#6cab55" text-anchor="middle" stroke="#6cab55" stroke-width="0.7"  textLength="53" lengthAdjust="spacingAndGlyphs">114 B</text><text x="1338.5" y="113" font-size="14" fill="#ccccdc" text-anchor="start" stroke="#ccccdc" stroke-width="0.5"  textLength="73.3" lengthAdjust="spacingAndGlyphs">Google hits</text><path d="M1412.6 208.7A47 47 0 1 1 1501.8 208.7" fill="none" stroke="#232428" stroke-width="16.7"/><path d="M1412.6 208.7A47 47 0 0 1 1414.3 175" fill="none" stroke="#6ca450" stroke-width="16.7"/><path d="M1402 212.2A58.1 58.1 0 0 1 1491 146.7" fill="none" stroke="#6ca450" stroke-width="2"/><path d="M1491 146.7A58.1 58.1 0 0 1 1515.3 191.9" fill="none" stroke="#e5832e" stroke-width="2"/><path d="M1515.3 191.9A58.1 58.1 0 0 1 1512.4 212.2" fill="none" stroke="#e02f2f" stroke-width="2"/><text x="1456" y="211" font-size="28.4" fill="#6cab55" text-anchor="middle" stroke="#0b0c0e" stroke-width="0" textLength="44.5" lengthAdjust="spacingAndGlyphs">57.1</text><text x="1456" y="211" font-size="28.4" fill="#6cab55" text-anchor="middle" stroke="#6cab55" stroke-width="0.7"  textLength="44.5" lengthAdjust="spacingAndGlyphs">57.1</text><text x="1075.5" y="258" font-size="14" fill="#ccccdc" text-anchor="start" stroke="#ccccdc" stroke-width="0.5"  textLength="85.4" lengthAdjust="spacingAndGlyphs">Support calls</text><polygon points="1068.8,336.3 1068.8,313.5 1071,314.4 1073.5,312.7 1076.9,315.2 1080.2,318.1 1082.8,315.2 1085.3,302.2 1087.8,316.9 1090.7,312.7 1093.7,314.4 1097.1,317.4 1099.7,313.9 1102.2,316.1 1105.2,309.8 1108.1,315.2 1110.6,318.9 1113.7,313.5 1115.7,316.9 1119.1,308.8 1121.6,316.9 1125,322.3 1127.5,318.6 1130.5,312.7 1133.4,318.6 1136.3,323.3 1139.3,318.6 1141.8,314 1144.4,318.6 1146.9,322 1150.3,316.1 1152.8,314.4 1156.2,311 1159.6,311.8 1162.1,313.5 1165.5,312.3 1168.8,312.3 1172.2,317.7 1175.6,311 1178.1,315.2 1180.7,317.7 1184.9,312.7 1187.4,317.4 1189.9,310.2 1193.3,310.2 1196.7,308 1200.1,314.4 1203.4,311.8 1206.8,308.5 1210.2,309.3 1211.9,316.1 1215.2,305.9 1218.6,309.3 1222,314.4 1224.5,315.2 1227.1,312.3 1229.6,314.4 1232.1,322 1234.7,319.4 1237.2,327 1239.7,322 1243.1,313.5 1245.6,321.1 1248.2,319.4 1250.7,317.7 1254.1,327.9 1257.4,336.3 1260,326.2 1262.5,302.6 1265,305.1 1268.4,305.9 1270.9,312.7 1273.5,307.6 1276,317.7 1279.4,310.7 1281.9,318.3 1284.4,314.4 1288.7,317.4 1292.9,317.4 1296.2,315.2 1299.6,318.6 1302.2,317.7 1304.7,312.3 1307.2,323.7 1310.6,322.8 1313.1,315.7 1316.5,317.7 1319,319.4 1319,336.3" fill="#48222a"/><polyline points="1068.8,313.5 1071,314.4 1073.5,312.7 1076.9,315.2 1080.2,318.1 1082.8,315.2 1085.3,302.2 1087.8,316.9 1090.7,312.7 1093.7,314.4 1097.1,317.4 1099.7,313.9 1102.2,316.1 1105.2,309.8 1108.1,315.2 1110.6,318.9 1113.7,313.5 1115.7,316.9 1119.1,308.8 1121.6,316.9 1125,322.3 1127.5,318.6 1130.5,312.7 1133.4,318.6 1136.3,323.3 1139.3,318.6 1141.8,314 1144.4,318.6 1146.9,322 1150.3,316.1 1152.8,314.4 1156.2,311 1159.6,311.8 1162.1,313.5 1165.5,312.3 1168.8,312.3 1172.2,317.7 1175.6,311 1178.1,315.2 1180.7,317.7 1184.9,312.7 1187.4,317.4 1189.9,310.2 1193.3,310.2 1196.7,308 1200.1,314.4 1203.4,311.8 1206.8,308.5 1210.2,309.3 1211.9,316.1 1215.2,305.9 1218.6,309.3 1222,314.4 1224.5,315.2 1227.1,312.3 1229.6,314.4 1232.1,322 1234.7,319.4 1237.2,327 1239.7,322 1243.1,313.5 1245.6,321.1 1248.2,319.4 1250.7,317.7 1254.1,327.9 1257.4,336.3 1260,326.2 1262.5,302.6 1265,305.1 1268.4,305.9 1270.9,312.7 1273.5,307.6 1276,317.7 1279.4,310.7 1281.9,318.3 1284.4,314.4 1288.7,317.4 1292.9,317.4 1296.2,315.2 1299.6,318.6 1302.2,317.7 1304.7,312.3 1307.2,323.7 1310.6,322.8 1313.1,315.7 1316.5,317.7 1319,319.4" fill="none" stroke="#e8343a" stroke-width="1.3" stroke-linejoin="round"/><text x="1194.6" y="310.3" font-size="22.5" fill="#e8343a" text-anchor="middle" stroke="#0b0c0e" stroke-width="2.4" paint-order="stroke" stroke-linejoin="round" textLength="47.3" lengthAdjust="spacingAndGlyphs">84.9</text><text x="1194.6" y="310.3" font-size="22.5" fill="#e8343a" text-anchor="middle" stroke="#e8343a" stroke-width="0.2"  textLength="47.3" lengthAdjust="spacingAndGlyphs">84.9</text><text x="1338.5" y="258" font-size="14" fill="#ccccdc" text-anchor="start" stroke="#ccccdc" stroke-width="0.5"  textLength="55.5" lengthAdjust="spacingAndGlyphs">Sign ups</text><polygon points="1331,335.9 1331,324.2 1336.6,316.3 1342.8,320.7 1348,311.9 1351.5,315.4 1356.8,312.3 1360.3,318.4 1362.9,316.3 1365.5,327.1 1368.1,318.4 1370.8,315.8 1373.4,321.9 1377.8,317.2 1382.1,311.4 1385.6,320.7 1390.9,321 1393.5,317.2 1397,319.3 1400.5,321 1402.3,325.4 1404.9,315.2 1407.5,324.9 1411,318.4 1415.4,311.9 1418.9,309.6 1421.5,319.3 1424.1,312.6 1426.8,317.5 1430.3,313.7 1435.5,323.6 1440.8,316.6 1443.4,320.1 1446.9,316.6 1449.5,318.4 1453,317.2 1460,315.8 1463.5,319.3 1466.1,317.5 1469.6,309.6 1473.1,317.2 1477.5,314.9 1481,317.2 1485.4,318.9 1488.9,314.9 1494.1,322.4 1498.5,318.4 1500.3,324.9 1505.5,324.2 1509,315.8 1511.6,321.4 1514.3,321 1517.8,335.9 1520.4,331.5 1523,330.6 1528.3,302.1 1530.9,305.3 1534.4,311.4 1537,309.6 1539.6,323.6 1542.3,319.6 1547.5,321.4 1551,317.5 1554.5,320.1 1558.9,323.6 1562.4,318.4 1564.1,319.3 1567.6,314.9 1570.3,325.4 1572.9,320.1 1576.4,319.3 1579,322.8 1582,317.9 1582,335.9" fill="#213724"/><polyline points="1331,324.2 1336.6,316.3 1342.8,320.7 1348,311.9 1351.5,315.4 1356.8,312.3 1360.3,318.4 1362.9,316.3 1365.5,327.1 1368.1,318.4 1370.8,315.8 1373.4,321.9 1377.8,317.2 1382.1,311.4 1385.6,320.7 1390.9,321 1393.5,317.2 1397,319.3 1400.5,321 1402.3,325.4 1404.9,315.2 1407.5,324.9 1411,318.4 1415.4,311.9 1418.9,309.6 1421.5,319.3 1424.1,312.6 1426.8,317.5 1430.3,313.7 1435.5,323.6 1440.8,316.6 1443.4,320.1 1446.9,316.6 1449.5,318.4 1453,317.2 1460,315.8 1463.5,319.3 1466.1,317.5 1469.6,309.6 1473.1,317.2 1477.5,314.9 1481,317.2 1485.4,318.9 1488.9,314.9 1494.1,322.4 1498.5,318.4 1500.3,324.9 1505.5,324.2 1509,315.8 1511.6,321.4 1514.3,321 1517.8,335.9 1520.4,331.5 1523,330.6 1528.3,302.1 1530.9,305.3 1534.4,311.4 1537,309.6 1539.6,323.6 1542.3,319.6 1547.5,321.4 1551,317.5 1554.5,320.1 1558.9,323.6 1562.4,318.4 1564.1,319.3 1567.6,314.9 1570.3,325.4 1572.9,320.1 1576.4,319.3 1579,322.8 1582,317.9" fill="none" stroke="#37b02f" stroke-width="1.3" stroke-linejoin="round"/><text x="1457.4" y="310.5" font-size="22.5" fill="#37b02f" text-anchor="middle" stroke="#0b0c0e" stroke-width="2.4" paint-order="stroke" stroke-linejoin="round" textLength="41.1" lengthAdjust="spacingAndGlyphs">283</text><text x="1457.4" y="310.5" font-size="22.5" fill="#37b02f" text-anchor="middle" stroke="#37b02f" stroke-width="0.2"  textLength="41.1" lengthAdjust="spacingAndGlyphs">283</text><text x="537" y="366" font-size="14" fill="#ccccdc" text-anchor="middle" stroke="#ccccdc" stroke-width="0.5"  textLength="100" lengthAdjust="spacingAndGlyphs">server requests</text><line x1="46.6" y1="393.3" x2="1034.6" y2="393.3" stroke="rgba(204,204,220,0.19)"/><text x="44" y="397.5" font-size="12" fill="#ccccdc" text-anchor="end" stroke="#ccccdc" stroke-width="0.25" >150</text><line x1="46.6" y1="452" x2="1034.6" y2="452" stroke="rgba(204,204,220,0.19)"/><text x="44" y="456.2" font-size="12" fill="#ccccdc" text-anchor="end" stroke="#ccccdc" stroke-width="0.25" >100</text><line x1="46.6" y1="510.8" x2="1034.6" y2="510.8" stroke="rgba(204,204,220,0.19)"/><text x="44" y="515" font-size="12" fill="#ccccdc" text-anchor="end" stroke="#ccccdc" stroke-width="0.25" >50</text><line x1="46.6" y1="569.5" x2="1034.6" y2="569.5" stroke="rgba(204,204,220,0.19)"/><text x="44" y="573.7" font-size="12" fill="#ccccdc" text-anchor="end" stroke="#ccccdc" stroke-width="0.25" >0</text><line x1="53.3" y1="393.3" x2="53.3" y2="569.5" stroke="rgba(204,204,220,0.19)"/><text x="53.3" y="588" font-size="12" fill="#ccccdc" text-anchor="middle" stroke="#ccccdc" stroke-width="0.25" >16:50</text><line x1="135.3" y1="393.3" x2="135.3" y2="569.5" stroke="rgba(204,204,220,0.19)"/><text x="135.3" y="588" font-size="12" fill="#ccccdc" text-anchor="middle" stroke="#ccccdc" stroke-width="0.25" >16:55</text><line x1="217.4" y1="393.3" x2="217.4" y2="569.5" stroke="rgba(204,204,220,0.19)"/><text x="217.4" y="588" font-size="12" fill="#ccccdc" text-anchor="middle" stroke="#ccccdc" stroke-width="0.25" >17:00</text><line x1="299.4" y1="393.3" x2="299.4" y2="569.5" stroke="rgba(204,204,220,0.19)"/><text x="299.4" y="588" font-size="12" fill="#ccccdc" text-anchor="middle" stroke="#ccccdc" stroke-width="0.25" >17:05</text><line x1="381.4" y1="393.3" x2="381.4" y2="569.5" stroke="rgba(204,204,220,0.19)"/><text x="381.4" y="588" font-size="12" fill="#ccccdc" text-anchor="middle" stroke="#ccccdc" stroke-width="0.25" >17:10</text><line x1="463.4" y1="393.3" x2="463.4" y2="569.5" stroke="rgba(204,204,220,0.19)"/><text x="463.4" y="588" font-size="12" fill="#ccccdc" text-anchor="middle" stroke="#ccccdc" stroke-width="0.25" >17:15</text><line x1="545.5" y1="393.3" x2="545.5" y2="569.5" stroke="rgba(204,204,220,0.19)"/><text x="545.5" y="588" font-size="12" fill="#ccccdc" text-anchor="middle" stroke="#ccccdc" stroke-width="0.25" >17:20</text><line x1="627.5" y1="393.3" x2="627.5" y2="569.5" stroke="rgba(204,204,220,0.19)"/><text x="627.5" y="588" font-size="12" fill="#ccccdc" text-anchor="middle" stroke="#ccccdc" stroke-width="0.25" >17:25</text><line x1="709.5" y1="393.3" x2="709.5" y2="569.5" stroke="rgba(204,204,220,0.19)"/><text x="709.5" y="588" font-size="12" fill="#ccccdc" text-anchor="middle" stroke="#ccccdc" stroke-width="0.25" >17:30</text><line x1="791.6" y1="393.3" x2="791.6" y2="569.5" stroke="rgba(204,204,220,0.19)"/><text x="791.6" y="588" font-size="12" fill="#ccccdc" text-anchor="middle" stroke="#ccccdc" stroke-width="0.25" >17:35</text><line x1="873.6" y1="393.3" x2="873.6" y2="569.5" stroke="rgba(204,204,220,0.19)"/><text x="873.6" y="588" font-size="12" fill="#ccccdc" text-anchor="middle" stroke="#ccccdc" stroke-width="0.25" >17:40</text><line x1="955.6" y1="393.3" x2="955.6" y2="569.5" stroke="rgba(204,204,220,0.19)"/><text x="955.6" y="588" font-size="12" fill="#ccccdc" text-anchor="middle" stroke="#ccccdc" stroke-width="0.25" >17:45</text><polygon points="50.6,569.5 50.6,440.9 54.6,433.5 58.8,431.4 63,432.4 67.3,426.1 71.5,428.2 74.7,432.4 79,432.4 83.2,429.3 86.4,425.7 89.6,431.4 91.7,443.1 94.9,437.8 98.1,435 101.2,439.9 104.4,439.9 108.7,436.7 111.9,438.8 116.1,437.8 120.3,438.8 124.6,440.9 128.8,432.4 132,433.5 136.3,436.7 140.5,433.5 145.8,440.5 151.1,437.1 155.4,437.1 160.7,432.4 166,437.1 170.2,434.6 174.5,432.4 178.7,415.5 182.9,430.3 186.1,436.7 189.3,431.4 192.5,429.3 196.7,432.4 201,434.1 206.3,434.6 210.5,432.4 214.8,430.3 220.1,440.9 225.4,430.3 229.6,431.4 233.9,433.5 238.1,438.8 243.4,439.9 247.7,443.1 254,433.5 257.2,438.8 261.5,435.6 266.8,432 272.1,437.8 275.3,438.8 280.6,434.6 285.9,432.4 290.1,440.9 293.2,434.1 297.4,435 301.7,430.3 305.9,427.8 311.2,430.3 315.5,434.6 319.7,438.4 325,440.5 331.4,443.1 336.7,438.4 340.9,437.8 345.2,438.8 349.4,436.7 353.7,437.8 357.9,435.6 362.2,432 365.3,437.8 368.5,444.8 373.8,438.8 379.1,439.9 384.4,440.9 388.7,444.1 391.9,436.7 395.1,430.3 399.3,433.5 402.5,440.9 406.7,444.8 409.9,448.4 415.2,442 419.5,437.8 423.7,431.4 429,436.3 433.3,433.5 437.5,434.6 441.7,431.4 447,429.3 451.3,430.7 456.6,430.3 459.8,434.1 464,434.6 469.3,432.4 474.6,430.3 478.9,434.1 483.1,432.4 488.4,434.6 492.7,428.6 498,435.6 503.3,431.4 508.6,432.4 512.8,434.1 518.1,442 522.4,439.9 528.8,435.6 534.1,438.4 539.2,437.8 543.5,433.5 547.7,435.6 552,432.4 556.2,434.6 561.5,429.3 566.8,434.6 572.1,433.5 577.4,434.6 581.7,430.3 585.9,431.4 589.1,429.3 593.4,431.4 597.6,428.6 602.9,436.7 607.2,430.7 612.5,429.9 616.7,431.4 621,433.5 626.3,437.8 630.5,433.5 636.9,432.4 641.1,428.2 645.4,425.7 650.7,427.1 654.9,424.4 660.2,432 663.4,433.5 668.7,438.4 675.1,429.3 681.4,431.4 686.7,432.4 692,432 696.3,429.3 699.5,434.6 703.7,437.1 709,431.4 713.3,432.4 715.4,435 720.7,427.1 724.9,436.7 729.2,442.6 732.4,438.8 737.7,429.3 741.9,433.5 747.2,444.8 753.6,440.9 762.1,435 765.3,440.9 770.6,440.9 774.8,439.2 779.1,434.6 783.2,432.4 788.5,439.9 793.8,432.4 800.2,440.9 805.5,440.5 810.8,435.6 817.1,445.2 823.5,432 828.8,445.2 836.2,466 839.4,467.5 845.8,456.9 849,456.9 852.2,459 855.3,451.5 860.6,429.3 864.9,417.2 868.1,419.7 873.4,418 882.9,417.6 888.2,419.7 892.5,421.8 897.8,437.8 906.3,423.5 912.6,432.4 920.1,444.1 924.3,437.8 928.6,436.7 934.9,433.5 941.3,438.4 945.5,442 956.1,436.3 961.5,438.4 967.8,430.3 972.1,435.6 976.3,438.4 980.6,438.8 983.7,442 990.1,435.6 994.3,435.6 998.6,445.2 1003.9,437.8 1009.2,442 1014.5,436.7 1020.9,440.9 1026.2,432 1032.2,436.3 1032.2,569.5" fill="#16355a"/><polyline points="50.6,440.9 54.6,433.5 58.8,431.4 63,432.4 67.3,426.1 71.5,428.2 74.7,432.4 79,432.4 83.2,429.3 86.4,425.7 89.6,431.4 91.7,443.1 94.9,437.8 98.1,435 101.2,439.9 104.4,439.9 108.7,436.7 111.9,438.8 116.1,437.8 120.3,438.8 124.6,440.9 128.8,432.4 132,433.5 136.3,436.7 140.5,433.5 145.8,440.5 151.1,437.1 155.4,437.1 160.7,432.4 166,437.1 170.2,434.6 174.5,432.4 178.7,415.5 182.9,430.3 186.1,436.7 189.3,431.4 192.5,429.3 196.7,432.4 201,434.1 206.3,434.6 210.5,432.4 214.8,430.3 220.1,440.9 225.4,430.3 229.6,431.4 233.9,433.5 238.1,438.8 243.4,439.9 247.7,443.1 254,433.5 257.2,438.8 261.5,435.6 266.8,432 272.1,437.8 275.3,438.8 280.6,434.6 285.9,432.4 290.1,440.9 293.2,434.1 297.4,435 301.7,430.3 305.9,427.8 311.2,430.3 315.5,434.6 319.7,438.4 325,440.5 331.4,443.1 336.7,438.4 340.9,437.8 345.2,438.8 349.4,436.7 353.7,437.8 357.9,435.6 362.2,432 365.3,437.8 368.5,444.8 373.8,438.8 379.1,439.9 384.4,440.9 388.7,444.1 391.9,436.7 395.1,430.3 399.3,433.5 402.5,440.9 406.7,444.8 409.9,448.4 415.2,442 419.5,437.8 423.7,431.4 429,436.3 433.3,433.5 437.5,434.6 441.7,431.4 447,429.3 451.3,430.7 456.6,430.3 459.8,434.1 464,434.6 469.3,432.4 474.6,430.3 478.9,434.1 483.1,432.4 488.4,434.6 492.7,428.6 498,435.6 503.3,431.4 508.6,432.4 512.8,434.1 518.1,442 522.4,439.9 528.8,435.6 534.1,438.4 539.2,437.8 543.5,433.5 547.7,435.6 552,432.4 556.2,434.6 561.5,429.3 566.8,434.6 572.1,433.5 577.4,434.6 581.7,430.3 585.9,431.4 589.1,429.3 593.4,431.4 597.6,428.6 602.9,436.7 607.2,430.7 612.5,429.9 616.7,431.4 621,433.5 626.3,437.8 630.5,433.5 636.9,432.4 641.1,428.2 645.4,425.7 650.7,427.1 654.9,424.4 660.2,432 663.4,433.5 668.7,438.4 675.1,429.3 681.4,431.4 686.7,432.4 692,432 696.3,429.3 699.5,434.6 703.7,437.1 709,431.4 713.3,432.4 715.4,435 720.7,427.1 724.9,436.7 729.2,442.6 732.4,438.8 737.7,429.3 741.9,433.5 747.2,444.8 753.6,440.9 762.1,435 765.3,440.9 770.6,440.9 774.8,439.2 779.1,434.6 783.2,432.4 788.5,439.9 793.8,432.4 800.2,440.9 805.5,440.5 810.8,435.6 817.1,445.2 823.5,432 828.8,445.2 836.2,466 839.4,467.5 845.8,456.9 849,456.9 852.2,459 855.3,451.5 860.6,429.3 864.9,417.2 868.1,419.7 873.4,418 882.9,417.6 888.2,419.7 892.5,421.8 897.8,437.8 906.3,423.5 912.6,432.4 920.1,444.1 924.3,437.8 928.6,436.7 934.9,433.5 941.3,438.4 945.5,442 956.1,436.3 961.5,438.4 967.8,430.3 972.1,435.6 976.3,438.4 980.6,438.8 983.7,442 990.1,435.6 994.3,435.6 998.6,445.2 1003.9,437.8 1009.2,442 1014.5,436.7 1020.9,440.9 1026.2,432 1032.2,436.3" fill="none" stroke="#1c4a80" stroke-width="1.2" stroke-linejoin="round"/><polygon points="50.6,569.5 50.6,473.8 54.6,468.5 58.8,467.5 63,467.5 67.3,462.2 71.5,464.3 74.7,467.5 79,466.4 83.2,466.4 86.4,464.3 89.6,470.6 91.7,477 94.9,469.6 98.1,466.4 101.2,471.7 104.4,470.6 108.7,469.6 111.9,472.8 116.1,471.7 120.3,470.6 124.6,471.7 128.8,466.4 132,469.6 136.3,468.5 140.5,468.5 145.8,472.8 151.1,471.7 155.4,472.3 160.7,466.4 166,469.6 170.2,468.5 174.5,468.5 178.7,451.5 182.9,470.6 186.1,468.5 189.3,464.3 192.5,462.2 196.7,467.5 201,468.5 206.3,469.6 210.5,465.3 214.8,466.4 220.1,474.9 225.4,466.4 229.6,467.5 233.9,469.6 238.1,470.6 243.4,471.7 245.6,476 248.7,472.8 254,466 257.2,472.8 261.5,465.3 266.8,469.6 272.1,472.8 275.3,471.7 280.6,469.6 285.9,467.5 290.1,473.8 293.2,466.4 297.4,469.6 301.7,472.8 305.9,462.6 311.2,465.3 315.5,469.6 319.7,473.2 325,473.2 331.4,476 336.7,469.6 342,474.5 348.4,467.5 353.7,469.6 362.2,468.5 368.5,479.1 373.8,471.7 379.1,472.8 384.4,474.5 388.7,478.1 395.1,462.2 399.3,469.6 402.5,477 406.7,477 409.9,480.2 417.3,473.8 423.7,463.2 427.9,471.7 433.3,465.3 437.5,470.2 442.8,464.7 448.1,466.4 453.4,465.3 459.8,468.5 466.1,468.1 471.5,466.4 476.8,467.5 482.1,470.2 487.4,466.8 493.7,463.2 499,470.2 504.3,463.2 510.7,468.5 518.1,477 522.4,472.8 528.8,471.7 534.1,468.5 539.2,467.5 543.5,472.8 547.7,466.4 552,470.6 556.2,466.4 561.5,465.3 566.8,469.6 572.1,468.1 577.4,468.1 580.6,463.9 584.9,468.5 589.1,462.6 593.4,466 598.7,466 602.9,471.7 608.2,465.3 613.5,465.3 617.8,469.6 621,467.5 626.3,471.7 630.5,466.4 636.9,466.8 641.1,463.2 645.4,460 650.7,462.2 654.9,461.1 660.2,466.8 663.4,466.4 668.7,472.3 675.1,463.2 681.4,466.4 686.7,464.3 692,469.6 696.3,463.9 699.5,464.7 702.7,471.7 709,466 713.3,471.1 716.5,470.2 720.7,461.7 724.9,469.6 729.2,473.8 732.4,474.5 737.7,462.2 741.9,469.6 748.3,478.1 753.6,473.8 757.8,468.5 762.1,473.8 765.3,476 770.6,473.8 774.8,474.9 781.2,468.5 784.2,472.8 788.5,473.2 793.8,468.1 800.2,474.9 805.5,473.8 810.8,469.6 817.1,480.2 823.5,466.4 827.8,474.9 836.2,491.4 839.4,492.9 845.8,484.4 851.1,490.8 855.3,479.1 860.6,462.2 864.9,454.7 868.1,457.5 873.4,455.8 881.9,454.7 888.2,456.9 892.5,462.2 897.8,470.2 906.3,458.3 912.6,467.5 919,474.9 924.3,468.9 929.6,472.8 934.9,468.1 941.3,471.7 946.6,474.9 956.1,468.9 961.5,470.6 965.7,466 972.1,470.6 976.3,469.6 980.6,474.9 983.7,473.8 992.2,465.3 998.6,476.6 1005,470.2 1011.3,475.3 1016.6,470.6 1020.9,473.8 1026.2,466 1032.2,470.6 1032.2,569.5" fill="#215083"/><polyline points="50.6,473.8 54.6,468.5 58.8,467.5 63,467.5 67.3,462.2 71.5,464.3 74.7,467.5 79,466.4 83.2,466.4 86.4,464.3 89.6,470.6 91.7,477 94.9,469.6 98.1,466.4 101.2,471.7 104.4,470.6 108.7,469.6 111.9,472.8 116.1,471.7 120.3,470.6 124.6,471.7 128.8,466.4 132,469.6 136.3,468.5 140.5,468.5 145.8,472.8 151.1,471.7 155.4,472.3 160.7,466.4 166,469.6 170.2,468.5 174.5,468.5 178.7,451.5 182.9,470.6 186.1,468.5 189.3,464.3 192.5,462.2 196.7,467.5 201,468.5 206.3,469.6 210.5,465.3 214.8,466.4 220.1,474.9 225.4,466.4 229.6,467.5 233.9,469.6 238.1,470.6 243.4,471.7 245.6,476 248.7,472.8 254,466 257.2,472.8 261.5,465.3 266.8,469.6 272.1,472.8 275.3,471.7 280.6,469.6 285.9,467.5 290.1,473.8 293.2,466.4 297.4,469.6 301.7,472.8 305.9,462.6 311.2,465.3 315.5,469.6 319.7,473.2 325,473.2 331.4,476 336.7,469.6 342,474.5 348.4,467.5 353.7,469.6 362.2,468.5 368.5,479.1 373.8,471.7 379.1,472.8 384.4,474.5 388.7,478.1 395.1,462.2 399.3,469.6 402.5,477 406.7,477 409.9,480.2 417.3,473.8 423.7,463.2 427.9,471.7 433.3,465.3 437.5,470.2 442.8,464.7 448.1,466.4 453.4,465.3 459.8,468.5 466.1,468.1 471.5,466.4 476.8,467.5 482.1,470.2 487.4,466.8 493.7,463.2 499,470.2 504.3,463.2 510.7,468.5 518.1,477 522.4,472.8 528.8,471.7 534.1,468.5 539.2,467.5 543.5,472.8 547.7,466.4 552,470.6 556.2,466.4 561.5,465.3 566.8,469.6 572.1,468.1 577.4,468.1 580.6,463.9 584.9,468.5 589.1,462.6 593.4,466 598.7,466 602.9,471.7 608.2,465.3 613.5,465.3 617.8,469.6 621,467.5 626.3,471.7 630.5,466.4 636.9,466.8 641.1,463.2 645.4,460 650.7,462.2 654.9,461.1 660.2,466.8 663.4,466.4 668.7,472.3 675.1,463.2 681.4,466.4 686.7,464.3 692,469.6 696.3,463.9 699.5,464.7 702.7,471.7 709,466 713.3,471.1 716.5,470.2 720.7,461.7 724.9,469.6 729.2,473.8 732.4,474.5 737.7,462.2 741.9,469.6 748.3,478.1 753.6,473.8 757.8,468.5 762.1,473.8 765.3,476 770.6,473.8 774.8,474.9 781.2,468.5 784.2,472.8 788.5,473.2 793.8,468.1 800.2,474.9 805.5,473.8 810.8,469.6 817.1,480.2 823.5,466.4 827.8,474.9 836.2,491.4 839.4,492.9 845.8,484.4 851.1,490.8 855.3,479.1 860.6,462.2 864.9,454.7 868.1,457.5 873.4,455.8 881.9,454.7 888.2,456.9 892.5,462.2 897.8,470.2 906.3,458.3 912.6,467.5 919,474.9 924.3,468.9 929.6,472.8 934.9,468.1 941.3,471.7 946.6,474.9 956.1,468.9 961.5,470.6 965.7,466 972.1,470.6 976.3,469.6 980.6,474.9 983.7,473.8 992.2,465.3 998.6,476.6 1005,470.2 1011.3,475.3 1016.6,470.6 1020.9,473.8 1026.2,466 1032.2,470.6" fill="none" stroke="#2f78c0" stroke-width="1.2" stroke-linejoin="round"/><polygon points="50.6,569.5 50.6,505.7 54.6,502.5 58.8,500.4 63,499.3 67.3,498.7 71.5,500.4 74.7,502.5 79,500.4 83.2,501.4 86.4,500.8 89.6,504.6 91.7,506.7 94.9,502.5 98.1,504.6 101.2,503.5 104.4,502.5 108.7,505.7 112.9,506.7 117.2,505.7 120.3,504.6 124.6,502.1 128.8,501.4 132,502.5 136.3,502.1 140.5,502.1 144.7,505 149,503.5 154.3,505 160.7,498.7 166,502.1 170.2,501.4 174.5,501.4 178.7,493.6 182.9,503.5 186.1,500.4 191.4,496.1 196.7,501.4 201,504.2 206.3,502.5 210.5,499.3 214.8,501.4 220.1,505.7 225.4,500.4 229.6,500.4 233.9,502.5 238.1,503.5 243.4,506.7 246.6,509.3 248.7,507.8 254,500.4 257.2,506.7 263.6,498.7 266.8,500.8 272.1,503.5 275.3,504.6 280.6,503.5 285.9,502.5 290.1,505.7 294.2,498.7 298.5,504.6 304.9,498.7 310.2,502.1 315.5,504.6 321.8,505.7 327.1,506.7 331.4,506.7 337.8,501.4 343.1,506.3 348.4,502.5 353.7,502.5 362.2,503.5 369.6,509.3 377,502.9 384.4,508.4 389.7,505.7 395.1,497.2 400.4,502.5 405.7,507.8 409.9,509.9 416.3,504.6 422.6,498.7 427.9,502.1 434.3,498.7 438.6,502.5 444.9,499.3 453.4,500.4 459.8,502.1 466.1,502.5 471.5,499.3 476.8,502.5 482.1,503.5 488.4,502.1 493.7,497.2 499,502.5 504.3,498.2 510.7,503.5 518.1,508.8 523.4,506.7 529.8,505.7 534.1,503.5 539.2,504.6 543.5,500.4 547.7,502.5 552,499.9 556.2,501.4 560.5,500.4 566.8,502.5 573.2,500.8 579.6,504.6 584.9,500.4 589.1,498.7 593.4,500.4 598.7,499.9 602.9,506.3 608.2,499.3 613.5,499.3 618.8,504.6 622,501.4 626.3,505 632.6,499.3 639,500.4 645.4,495.1 650.7,498.2 657,498.2 662.3,502.1 668.7,500.4 675.1,501.4 681.4,499.3 686.7,501.4 692,501.4 698.4,498.2 702.7,506.3 709,500.4 713.3,501.4 721.8,498.2 728.1,506.3 732.4,504.6 737.7,498.7 744,506.7 749.3,507.1 755.7,505.7 758.9,501.4 764.2,504.2 770.6,504.6 774.8,504.6 781.2,499.9 785.3,505.7 791.7,503.5 795.9,502.5 800.2,506.7 805.5,505.7 811.8,501.4 816.1,511.4 821.4,500.4 825.6,501.4 830.9,511 837.3,519 845.8,511 851.1,516.9 857.5,503.5 864.9,494 869.1,494.4 873.4,491.9 881.9,493.6 888.2,493.6 892.5,497.2 897.8,502.9 906.3,496.1 912.6,499.9 917.9,507.1 924.3,503.5 928.6,505.7 934.9,502.1 941.3,504.6 946.6,505.7 956.1,503.5 961.5,504.6 965.7,498.7 972.1,502.5 976.3,502.5 980.6,506.7 985.9,502.9 992.2,502.5 998.6,508.8 1003.9,503.5 1011.3,507.8 1016.6,503.5 1020.9,505.7 1026.2,500.4 1032.2,505.7 1032.2,569.5" fill="#3e6590"/><polyline points="50.6,505.7 54.6,502.5 58.8,500.4 63,499.3 67.3,498.7 71.5,500.4 74.7,502.5 79,500.4 83.2,501.4 86.4,500.8 89.6,504.6 91.7,506.7 94.9,502.5 98.1,504.6 101.2,503.5 104.4,502.5 108.7,505.7 112.9,506.7 117.2,505.7 120.3,504.6 124.6,502.1 128.8,501.4 132,502.5 136.3,502.1 140.5,502.1 144.7,505 149,503.5 154.3,505 160.7,498.7 166,502.1 170.2,501.4 174.5,501.4 178.7,493.6 182.9,503.5 186.1,500.4 191.4,496.1 196.7,501.4 201,504.2 206.3,502.5 210.5,499.3 214.8,501.4 220.1,505.7 225.4,500.4 229.6,500.4 233.9,502.5 238.1,503.5 243.4,506.7 246.6,509.3 248.7,507.8 254,500.4 257.2,506.7 263.6,498.7 266.8,500.8 272.1,503.5 275.3,504.6 280.6,503.5 285.9,502.5 290.1,505.7 294.2,498.7 298.5,504.6 304.9,498.7 310.2,502.1 315.5,504.6 321.8,505.7 327.1,506.7 331.4,506.7 337.8,501.4 343.1,506.3 348.4,502.5 353.7,502.5 362.2,503.5 369.6,509.3 377,502.9 384.4,508.4 389.7,505.7 395.1,497.2 400.4,502.5 405.7,507.8 409.9,509.9 416.3,504.6 422.6,498.7 427.9,502.1 434.3,498.7 438.6,502.5 444.9,499.3 453.4,500.4 459.8,502.1 466.1,502.5 471.5,499.3 476.8,502.5 482.1,503.5 488.4,502.1 493.7,497.2 499,502.5 504.3,498.2 510.7,503.5 518.1,508.8 523.4,506.7 529.8,505.7 534.1,503.5 539.2,504.6 543.5,500.4 547.7,502.5 552,499.9 556.2,501.4 560.5,500.4 566.8,502.5 573.2,500.8 579.6,504.6 584.9,500.4 589.1,498.7 593.4,500.4 598.7,499.9 602.9,506.3 608.2,499.3 613.5,499.3 618.8,504.6 622,501.4 626.3,505 632.6,499.3 639,500.4 645.4,495.1 650.7,498.2 657,498.2 662.3,502.1 668.7,500.4 675.1,501.4 681.4,499.3 686.7,501.4 692,501.4 698.4,498.2 702.7,506.3 709,500.4 713.3,501.4 721.8,498.2 728.1,506.3 732.4,504.6 737.7,498.7 744,506.7 749.3,507.1 755.7,505.7 758.9,501.4 764.2,504.2 770.6,504.6 774.8,504.6 781.2,499.9 785.3,505.7 791.7,503.5 795.9,502.5 800.2,506.7 805.5,505.7 811.8,501.4 816.1,511.4 821.4,500.4 825.6,501.4 830.9,511 837.3,519 845.8,511 851.1,516.9 857.5,503.5 864.9,494 869.1,494.4 873.4,491.9 881.9,493.6 888.2,493.6 892.5,497.2 897.8,502.9 906.3,496.1 912.6,499.9 917.9,507.1 924.3,503.5 928.6,505.7 934.9,502.1 941.3,504.6 946.6,505.7 956.1,503.5 961.5,504.6 965.7,498.7 972.1,502.5 976.3,502.5 980.6,506.7 985.9,502.9 992.2,502.5 998.6,508.8 1003.9,503.5 1011.3,507.8 1016.6,503.5 1020.9,505.7 1026.2,500.4 1032.2,505.7" fill="none" stroke="#4a8fd0" stroke-width="1.2" stroke-linejoin="round"/><polygon points="50.6,569.5 50.6,536.4 54.6,534.3 58.8,533.3 63,534.3 67.3,533.3 71.5,536 74.7,536 79,534.9 83.2,534.9 86.4,535.4 89.6,538.1 91.7,538.1 95.9,535.4 99.1,537.1 102.3,534.3 105.5,532.2 108.7,536.9 112.9,537.5 118.2,537.5 122.5,538.1 126.7,536.4 131,536.4 135.2,535.4 140.5,536.4 144.7,538.6 149,536.4 154.3,536.4 160.7,532.6 166,536 170.2,535.4 176.6,531.1 180.8,533.9 186.1,537.5 192.5,532.6 196.7,535.4 201,536.4 206.3,535.6 211.6,536.4 214.8,536 220.1,538.6 225.4,535.4 229.6,534.3 234.9,537.5 239.2,534.7 243.4,538.6 247.7,539.6 254,535.4 258.3,536.9 263.6,535.4 266.8,536.9 271,535.4 273.1,536.4 280.6,534.7 285.9,537.5 290.1,537.5 294.2,536.4 298.5,535.4 304.9,534.7 311.2,536.4 317.6,536.4 324,537.5 329.3,539.6 335.6,534.7 340.9,536.9 347.3,536 353.7,536.9 362.2,536.4 368.5,539.6 373.8,536.4 379.1,537.5 384.4,539 389.7,537.5 395.1,534.3 400.4,537.5 407.8,539.6 413.1,538.6 417.3,536.4 423.7,534.3 427.9,536.4 434.3,533.3 438.6,536.4 447,536 453.4,537.5 459.8,536.4 466.1,536.4 471.5,534.3 476.8,537.5 482.1,534.7 488.4,536.4 492.7,534.3 498,538.6 504.3,533.9 510.7,536.4 515,538.6 523.4,539 529.8,537.5 534.1,535.4 539.2,535.4 543.5,536 547.7,534.7 553,533.9 558.3,534.7 562.6,534.3 569,535.6 575.3,534.7 581.7,537.5 588.1,531.8 593.4,535.4 598.7,534.3 602.9,539.6 608.2,536.4 613.5,534.3 618.8,538.1 624.1,534.3 628.4,536.4 633.7,533.3 639,535.4 645.4,534.3 651.7,532.6 657,533.9 662.3,534.7 668.7,538.1 675.1,536 681.4,535.4 687.8,534.3 693.1,536 697.4,533.3 701.6,538.6 709,532.6 715.4,536 721.8,535.4 728.1,538.6 736.6,533.3 741.9,537.5 753.6,538.6 760,536 764.2,536.4 770.6,533.3 774.8,534.7 781.2,532.6 784.2,536.4 788.5,535.4 793.8,537.5 800.2,539.6 805.5,537.5 810.8,535.4 816.1,540.7 821.4,534.7 826.7,538.6 832,540.7 837.3,546 843.7,541.1 850,542.4 857.5,533.3 864.9,530.5 871.3,529.6 877.6,532.6 882.9,531.1 887.2,529 895.7,536.4 903.1,535.4 911.6,534.7 917.9,539 924.3,535.4 928.6,538.1 934.9,536 941.3,537.5 947.7,535.4 956.1,536 962.5,532.2 972.1,536 981.6,539 988,536 996.5,537.5 1002.8,536.9 1009.2,539 1015.6,536.4 1020.9,538.1 1026.2,535.4 1032.2,538.6 1032.2,569.5" fill="#7a8f9c"/><polyline points="50.6,536.4 54.6,534.3 58.8,533.3 63,534.3 67.3,533.3 71.5,536 74.7,536 79,534.9 83.2,534.9 86.4,535.4 89.6,538.1 91.7,538.1 95.9,535.4 99.1,537.1 102.3,534.3 105.5,532.2 108.7,536.9 112.9,537.5 118.2,537.5 122.5,538.1 126.7,536.4 131,536.4 135.2,535.4 140.5,536.4 144.7,538.6 149,536.4 154.3,536.4 160.7,532.6 166,536 170.2,535.4 176.6,531.1 180.8,533.9 186.1,537.5 192.5,532.6 196.7,535.4 201,536.4 206.3,535.6 211.6,536.4 214.8,536 220.1,538.6 225.4,535.4 229.6,534.3 234.9,537.5 239.2,534.7 243.4,538.6 247.7,539.6 254,535.4 258.3,536.9 263.6,535.4 266.8,536.9 271,535.4 273.1,536.4 280.6,534.7 285.9,537.5 290.1,537.5 294.2,536.4 298.5,535.4 304.9,534.7 311.2,536.4 317.6,536.4 324,537.5 329.3,539.6 335.6,534.7 340.9,536.9 347.3,536 353.7,536.9 362.2,536.4 368.5,539.6 373.8,536.4 379.1,537.5 384.4,539 389.7,537.5 395.1,534.3 400.4,537.5 407.8,539.6 413.1,538.6 417.3,536.4 423.7,534.3 427.9,536.4 434.3,533.3 438.6,536.4 447,536 453.4,537.5 459.8,536.4 466.1,536.4 471.5,534.3 476.8,537.5 482.1,534.7 488.4,536.4 492.7,534.3 498,538.6 504.3,533.9 510.7,536.4 515,538.6 523.4,539 529.8,537.5 534.1,535.4 539.2,535.4 543.5,536 547.7,534.7 553,533.9 558.3,534.7 562.6,534.3 569,535.6 575.3,534.7 581.7,537.5 588.1,531.8 593.4,535.4 598.7,534.3 602.9,539.6 608.2,536.4 613.5,534.3 618.8,538.1 624.1,534.3 628.4,536.4 633.7,533.3 639,535.4 645.4,534.3 651.7,532.6 657,533.9 662.3,534.7 668.7,538.1 675.1,536 681.4,535.4 687.8,534.3 693.1,536 697.4,533.3 701.6,538.6 709,532.6 715.4,536 721.8,535.4 728.1,538.6 736.6,533.3 741.9,537.5 753.6,538.6 760,536 764.2,536.4 770.6,533.3 774.8,534.7 781.2,532.6 784.2,536.4 788.5,535.4 793.8,537.5 800.2,539.6 805.5,537.5 810.8,535.4 816.1,540.7 821.4,534.7 826.7,538.6 832,540.7 837.3,546 843.7,541.1 850,542.4 857.5,533.3 864.9,530.5 871.3,529.6 877.6,532.6 882.9,531.1 887.2,529 895.7,536.4 903.1,535.4 911.6,534.7 917.9,539 924.3,535.4 928.6,538.1 934.9,536 941.3,537.5 947.7,535.4 956.1,536 962.5,532.2 972.1,536 981.6,539 988,536 996.5,537.5 1002.8,536.9 1009.2,539 1015.6,536.4 1020.9,538.1 1026.2,535.4 1032.2,538.6" fill="none" stroke="#c8dff2" stroke-width="1.2" stroke-linejoin="round"/><line x1="50.6" y1="452" x2="1034.6" y2="452" stroke="rgba(204,204,220,0.06)"/><line x1="50.6" y1="510.8" x2="1034.6" y2="510.8" stroke="rgba(204,204,220,0.06)"/><line x1="50.6" y1="569.5" x2="1034.6" y2="569.5" stroke="rgba(204,204,220,0.06)"/><line x1="53.3" y1="393.3" x2="53.3" y2="569.5" stroke="rgba(204,204,220,0.06)"/><line x1="135.3" y1="393.3" x2="135.3" y2="569.5" stroke="rgba(204,204,220,0.06)"/><line x1="217.4" y1="393.3" x2="217.4" y2="569.5" stroke="rgba(204,204,220,0.06)"/><line x1="299.4" y1="393.3" x2="299.4" y2="569.5" stroke="rgba(204,204,220,0.06)"/><line x1="381.4" y1="393.3" x2="381.4" y2="569.5" stroke="rgba(204,204,220,0.06)"/><line x1="463.4" y1="393.3" x2="463.4" y2="569.5" stroke="rgba(204,204,220,0.06)"/><line x1="545.5" y1="393.3" x2="545.5" y2="569.5" stroke="rgba(204,204,220,0.06)"/><line x1="627.5" y1="393.3" x2="627.5" y2="569.5" stroke="rgba(204,204,220,0.06)"/><line x1="709.5" y1="393.3" x2="709.5" y2="569.5" stroke="rgba(204,204,220,0.06)"/><line x1="791.6" y1="393.3" x2="791.6" y2="569.5" stroke="rgba(204,204,220,0.06)"/><line x1="873.6" y1="393.3" x2="873.6" y2="569.5" stroke="rgba(204,204,220,0.06)"/><line x1="955.6" y1="393.3" x2="955.6" y2="569.5" stroke="rgba(204,204,220,0.06)"/><rect x="33.7" y="606.3" width="13.5" height="4" rx="2" fill="#d3e6f4"/><text x="60.1" y="612.5" font-size="12" fill="#ccccdc" text-anchor="start" stroke="#ccccdc" stroke-width="0.25" >web_server_01</text><rect x="156.3" y="606.3" width="13.5" height="4" rx="2" fill="#5aa0de"/><text x="182.6" y="612.5" font-size="12" fill="#ccccdc" text-anchor="start" stroke="#ccccdc" stroke-width="0.25" >web_server_02</text><rect x="280.1" y="606.3" width="13.5" height="4" rx="2" fill="#3584d3"/><text x="307.1" y="612.5" font-size="12" fill="#ccccdc" text-anchor="start" stroke="#ccccdc" stroke-width="0.25" >web_server_03</text><rect x="405" y="606.3" width="13.5" height="4" rx="2" fill="#1c4a80"/><text x="432" y="612.5" font-size="12" fill="#ccccdc" text-anchor="start" stroke="#ccccdc" stroke-width="0.25" >web_server_04</text><text x="1075.2" y="366" font-size="14" fill="#ccccdc" text-anchor="start" stroke="#ccccdc" stroke-width="0.5"  textLength="73.3" lengthAdjust="spacingAndGlyphs">Google hits</text><rect x="1075.2" y="410.2" width="92.2" height="187" fill="#222327"/><rect x="1075.2" y="595.8" width="92.2" height="1.4" fill="#2e4a70"/><rect x="1075.2" y="595.8" width="92.2" height="2" fill="#5794F2"/><text x="1121.3" y="404" font-size="26" fill="#5794F2" text-anchor="middle" stroke="#5794F2" stroke-width="0.6"  textLength="63.1" lengthAdjust="spacingAndGlyphs">0.400</text><text x="1121.3" y="613" font-size="14" fill="#ccccdc" text-anchor="middle" stroke="#ccccdc" stroke-width="0.25" >A-series</text><rect x="1177.1" y="410.2" width="92.2" height="187" fill="#222327"/><rect x="1177.1" y="544.2" width="92.2" height="53" fill="#2e4a70"/><rect x="1177.1" y="544.2" width="92.2" height="2" fill="#5794F2"/><text x="1223.2" y="404" font-size="26" fill="#5794F2" text-anchor="middle" stroke="#5794F2" stroke-width="0.6" >27.7</text><text x="1223.2" y="613" font-size="14" fill="#ccccdc" text-anchor="middle" stroke="#ccccdc" stroke-width="0.25" >B-series</text><rect x="1279.4" y="410.2" width="92.2" height="187" fill="#222327"/><rect x="1279.4" y="526.3" width="92.2" height="70.9" fill="#2e4a70"/><rect x="1279.4" y="526.3" width="92.2" height="2" fill="#5794F2"/><text x="1325.5" y="404" font-size="26" fill="#5794F2" text-anchor="middle" stroke="#5794F2" stroke-width="0.6" >37.1</text><text x="1325.5" y="613" font-size="14" fill="#ccccdc" text-anchor="middle" stroke="#ccccdc" stroke-width="0.25" >C-series</text><rect x="1381.3" y="410.2" width="92.2" height="187" fill="#222327"/><rect x="1381.3" y="470.3" width="92.2" height="126.9" fill="#533d63"/><rect x="1381.3" y="470.3" width="92.2" height="2" fill="#B877D9"/><text x="1427.4" y="404" font-size="26" fill="#B877D9" text-anchor="middle" stroke="#B877D9" stroke-width="0.6" >66.5</text><text x="1427.4" y="613" font-size="14" fill="#ccccdc" text-anchor="middle" stroke="#ccccdc" stroke-width="0.25" >D-series</text><rect x="1483.6" y="410.2" width="92.2" height="187" fill="#222327"/><rect x="1483.6" y="557" width="92.2" height="40.2" fill="#2e4a70"/><rect x="1483.6" y="557" width="92.2" height="2" fill="#5794F2"/><text x="1529.7" y="404" font-size="26" fill="#5794F2" text-anchor="middle" stroke="#5794F2" stroke-width="0.6" >21.2</text><text x="1529.7" y="613" font-size="14" fill="#ccccdc" text-anchor="middle" stroke="#ccccdc" stroke-width="0.25" >E-series</text><text x="800" y="656" font-size="14" fill="#ccccdc" text-anchor="middle" stroke="#ccccdc" stroke-width="0.5"  textLength="153.9" lengthAdjust="spacingAndGlyphs">client side full page load</text><line x1="56.7" y1="683.6" x2="1412.5" y2="683.6" stroke="rgba(204,204,220,0.19)"/><text x="50.5" y="687.8" font-size="12" fill="#ccccdc" text-anchor="end" stroke="#ccccdc" stroke-width="0.25" >5 s</text><line x1="56.7" y1="716.7" x2="1412.5" y2="716.7" stroke="rgba(204,204,220,0.19)"/><text x="50.5" y="720.9" font-size="12" fill="#ccccdc" text-anchor="end" stroke="#ccccdc" stroke-width="0.25" >4 s</text><line x1="56.7" y1="749.8" x2="1412.5" y2="749.8" stroke="rgba(204,204,220,0.19)"/><text x="50.5" y="754" font-size="12" fill="#ccccdc" text-anchor="end" stroke="#ccccdc" stroke-width="0.25" >3 s</text><line x1="56.7" y1="783" x2="1412.5" y2="783" stroke="rgba(204,204,220,0.19)"/><text x="50.5" y="787.2" font-size="12" fill="#ccccdc" text-anchor="end" stroke="#ccccdc" stroke-width="0.25" >2 s</text><line x1="56.7" y1="816.1" x2="1412.5" y2="816.1" stroke="rgba(204,204,220,0.19)"/><text x="50.5" y="820.3" font-size="12" fill="#ccccdc" text-anchor="end" stroke="#ccccdc" stroke-width="0.25" >1 s</text><line x1="56.7" y1="849.2" x2="1412.5" y2="849.2" stroke="rgba(204,204,220,0.19)"/><text x="50.5" y="853.4" font-size="12" fill="#ccccdc" text-anchor="end" stroke="#ccccdc" stroke-width="0.25" >0 ms</text><line x1="61.4" y1="683.6" x2="61.4" y2="849.2" stroke="rgba(204,204,220,0.19)"/><text x="61.4" y="867" font-size="12" fill="#ccccdc" text-anchor="middle" stroke="#ccccdc" stroke-width="0.25" >16:50</text><line x1="174.3" y1="683.6" x2="174.3" y2="849.2" stroke="rgba(204,204,220,0.19)"/><text x="174.3" y="867" font-size="12" fill="#ccccdc" text-anchor="middle" stroke="#ccccdc" stroke-width="0.25" >16:55</text><line x1="287.2" y1="683.6" x2="287.2" y2="849.2" stroke="rgba(204,204,220,0.19)"/><text x="287.2" y="867" font-size="12" fill="#ccccdc" text-anchor="middle" stroke="#ccccdc" stroke-width="0.25" >17:00</text><line x1="400.1" y1="683.6" x2="400.1" y2="849.2" stroke="rgba(204,204,220,0.19)"/><text x="400.1" y="867" font-size="12" fill="#ccccdc" text-anchor="middle" stroke="#ccccdc" stroke-width="0.25" >17:05</text><line x1="513" y1="683.6" x2="513" y2="849.2" stroke="rgba(204,204,220,0.19)"/><text x="513" y="867" font-size="12" fill="#ccccdc" text-anchor="middle" stroke="#ccccdc" stroke-width="0.25" >17:10</text><line x1="625.9" y1="683.6" x2="625.9" y2="849.2" stroke="rgba(204,204,220,0.19)"/><text x="625.9" y="867" font-size="12" fill="#ccccdc" text-anchor="middle" stroke="#ccccdc" stroke-width="0.25" >17:15</text><line x1="738.8" y1="683.6" x2="738.8" y2="849.2" stroke="rgba(204,204,220,0.19)"/><text x="738.8" y="867" font-size="12" fill="#ccccdc" text-anchor="middle" stroke="#ccccdc" stroke-width="0.25" >17:20</text><line x1="851.7" y1="683.6" x2="851.7" y2="849.2" stroke="rgba(204,204,220,0.19)"/><text x="851.7" y="867" font-size="12" fill="#ccccdc" text-anchor="middle" stroke="#ccccdc" stroke-width="0.25" >17:25</text><line x1="964.6" y1="683.6" x2="964.6" y2="849.2" stroke="rgba(204,204,220,0.19)"/><text x="964.6" y="867" font-size="12" fill="#ccccdc" text-anchor="middle" stroke="#ccccdc" stroke-width="0.25" >17:30</text><line x1="1077.5" y1="683.6" x2="1077.5" y2="849.2" stroke="rgba(204,204,220,0.19)"/><text x="1077.5" y="867" font-size="12" fill="#ccccdc" text-anchor="middle" stroke="#ccccdc" stroke-width="0.25" >17:35</text><line x1="1190.4" y1="683.6" x2="1190.4" y2="849.2" stroke="rgba(204,204,220,0.19)"/><text x="1190.4" y="867" font-size="12" fill="#ccccdc" text-anchor="middle" stroke="#ccccdc" stroke-width="0.25" >17:40</text><line x1="1303.3" y1="683.6" x2="1303.3" y2="849.2" stroke="rgba(204,204,220,0.19)"/><text x="1303.3" y="867" font-size="12" fill="#ccccdc" text-anchor="middle" stroke="#ccccdc" stroke-width="0.25" >17:45</text><rect x="55.8" y="738.1" width="21.4" height="56.3" fill="#e24d42"/><rect x="55.8" y="794.4" width="21.4" height="34.5" fill="#ef843c"/><rect x="55.8" y="828.9" width="21.4" height="17.8" fill="#eab839"/><rect x="55.8" y="846.7" width="21.4" height="2.5" fill="#f2c96d"/><rect x="106.6" y="778.9" width="60.1" height="31.1" fill="#e24d42"/><rect x="106.6" y="810" width="60.1" height="24.6" fill="#ef843c"/><rect x="106.6" y="834.6" width="60.1" height="13.8" fill="#eab839"/><rect x="106.6" y="848.4" width="60.1" height="0.8" fill="#f2c96d"/><rect x="196.8" y="745.5" width="60" height="48.9" fill="#e24d42"/><rect x="196.8" y="794.4" width="60" height="33.1" fill="#ef843c"/><rect x="196.8" y="827.5" width="60" height="18.6" fill="#eab839"/><rect x="196.8" y="846.1" width="60" height="3.1" fill="#f2c96d"/><rect x="287.2" y="746.5" width="60.4" height="49" fill="#e24d42"/><rect x="287.2" y="795.5" width="60.4" height="33" fill="#ef843c"/><rect x="287.2" y="828.5" width="60.4" height="17.6" fill="#eab839"/><rect x="287.2" y="846.1" width="60.4" height="3.1" fill="#f2c96d"/><rect x="377.3" y="755.6" width="60.7" height="43.9" fill="#e24d42"/><rect x="377.3" y="799.5" width="60.7" height="31.1" fill="#ef843c"/><rect x="377.3" y="830.6" width="60.7" height="16.1" fill="#eab839"/><rect x="377.3" y="846.7" width="60.7" height="2.5" fill="#f2c96d"/><rect x="467.8" y="758.7" width="60.4" height="38.1" fill="#e24d42"/><rect x="467.8" y="796.8" width="60.4" height="32.1" fill="#ef843c"/><rect x="467.8" y="828.9" width="60.4" height="16.8" fill="#eab839"/><rect x="467.8" y="845.7" width="60.4" height="3.5" fill="#f2c96d"/><rect x="558.3" y="758.7" width="60.5" height="43.8" fill="#e24d42"/><rect x="558.3" y="802.5" width="60.5" height="27" fill="#ef843c"/><rect x="558.3" y="829.5" width="60.5" height="15.6" fill="#eab839"/><rect x="558.3" y="845.1" width="60.5" height="4.1" fill="#f2c96d"/><rect x="648.5" y="745.8" width="60.4" height="45.6" fill="#e24d42"/><rect x="648.5" y="791.4" width="60.4" height="35.1" fill="#ef843c"/><rect x="648.5" y="826.5" width="60.4" height="17.9" fill="#eab839"/><rect x="648.5" y="844.4" width="60.4" height="4.8" fill="#f2c96d"/><rect x="739.2" y="717.8" width="60.1" height="61.8" fill="#e24d42"/><rect x="739.2" y="779.6" width="60.1" height="43.9" fill="#ef843c"/><rect x="739.2" y="823.5" width="60.1" height="19.9" fill="#eab839"/><rect x="739.2" y="843.4" width="60.1" height="5.8" fill="#f2c96d"/><rect x="829.4" y="753.3" width="60.4" height="42.2" fill="#e24d42"/><rect x="829.4" y="795.5" width="60.4" height="30.3" fill="#ef843c"/><rect x="829.4" y="825.8" width="60.4" height="18.3" fill="#eab839"/><rect x="829.4" y="844.1" width="60.4" height="5.1" fill="#f2c96d"/><rect x="919.5" y="718.2" width="60.4" height="58.4" fill="#e24d42"/><rect x="919.5" y="776.6" width="60.4" height="43.2" fill="#ef843c"/><rect x="919.5" y="819.8" width="60.4" height="20.5" fill="#eab839"/><rect x="919.5" y="840.3" width="60.4" height="8.9" fill="#f2c96d"/><rect x="1010.1" y="744.6" width="60" height="48.7" fill="#e24d42"/><rect x="1010.1" y="793.3" width="60" height="36.8" fill="#ef843c"/><rect x="1010.1" y="830.1" width="60" height="15.2" fill="#eab839"/><rect x="1010.1" y="845.3" width="60" height="3.9" fill="#f2c96d"/><rect x="1100.5" y="722.4" width="60" height="63.4" fill="#e24d42"/><rect x="1100.5" y="785.8" width="60" height="39.4" fill="#ef843c"/><rect x="1100.5" y="825.2" width="60" height="18" fill="#eab839"/><rect x="1100.5" y="843.2" width="60" height="6" fill="#f2c96d"/><rect x="1190.5" y="739.7" width="60.4" height="46.1" fill="#e24d42"/><rect x="1190.5" y="785.8" width="60.4" height="35.3" fill="#ef843c"/><rect x="1190.5" y="821.1" width="60.4" height="20.2" fill="#eab839"/><rect x="1190.5" y="841.3" width="60.4" height="7.9" fill="#f2c96d"/><rect x="1281.2" y="720.2" width="60" height="57.4" fill="#e24d42"/><rect x="1281.2" y="777.6" width="60" height="39" fill="#ef843c"/><rect x="1281.2" y="816.6" width="60" height="24.7" fill="#eab839"/><rect x="1281.2" y="841.3" width="60" height="7.9" fill="#f2c96d"/><rect x="1371.2" y="755.8" width="41.3" height="45" fill="#e24d42"/><rect x="1371.2" y="800.8" width="41.3" height="33" fill="#ef843c"/><rect x="1371.2" y="833.8" width="41.3" height="15.3" fill="#eab839"/><text x="1561.5" y="692.5" font-size="12" fill="#3d9ae8" text-anchor="end" stroke="#3d9ae8" stroke-width="0.25" >avg</text><rect x="1434.3" y="708.9" width="13.8" height="4" rx="2" fill="#fde5dc"/><text x="1457.5" y="715.1" font-size="12" fill="#ccccdc" text-anchor="start" stroke="#ccccdc" stroke-width="0.25" >upper_25</text><text x="1569.5" y="715.1" font-size="12" fill="#ccccdc" text-anchor="end" stroke="#ccccdc" stroke-width="0.25" >6.81 ms</text><rect x="1433" y="723.9" width="138" height="25" fill="rgba(204,204,220,0.05)"/><rect x="1434.3" y="734.4" width="13.8" height="4" rx="2" fill="#f4d07a"/><text x="1457.5" y="740.6" font-size="12" fill="#ccccdc" text-anchor="start" stroke="#ccccdc" stroke-width="0.25" >upper_50</text><text x="1569.5" y="740.6" font-size="12" fill="#ccccdc" text-anchor="end" stroke="#ccccdc" stroke-width="0.25" >142 ms</text><rect x="1434.3" y="759.9" width="13.8" height="4" rx="2" fill="#eab839"/><text x="1457.5" y="766.1" font-size="12" fill="#ccccdc" text-anchor="start" stroke="#ccccdc" stroke-width="0.25" >upper_75</text><text x="1569.5" y="766.1" font-size="12" fill="#ccccdc" text-anchor="end" stroke="#ccccdc" stroke-width="0.25" >535 ms</text><rect x="1433" y="774.9" width="138" height="25" fill="rgba(204,204,220,0.05)"/><rect x="1434.3" y="785.4" width="13.8" height="4" rx="2" fill="#ef843c"/><text x="1457.5" y="791.6" font-size="12" fill="#ccccdc" text-anchor="start" stroke="#ccccdc" stroke-width="0.25" >upper_90</text><text x="1569.5" y="791.6" font-size="12" fill="#ccccdc" text-anchor="end" stroke="#ccccdc" stroke-width="0.25" >1.04 s</text><rect x="1434.3" y="810.9" width="13.8" height="4" rx="2" fill="#e24d42"/><text x="1457.5" y="817.1" font-size="12" fill="#ccccdc" text-anchor="start" stroke="#ccccdc" stroke-width="0.25" >upper_95</text><text x="1569.5" y="817.1" font-size="12" fill="#ccccdc" text-anchor="end" stroke="#ccccdc" stroke-width="0.25" >1.46 s</text>
</svg></body></html>
